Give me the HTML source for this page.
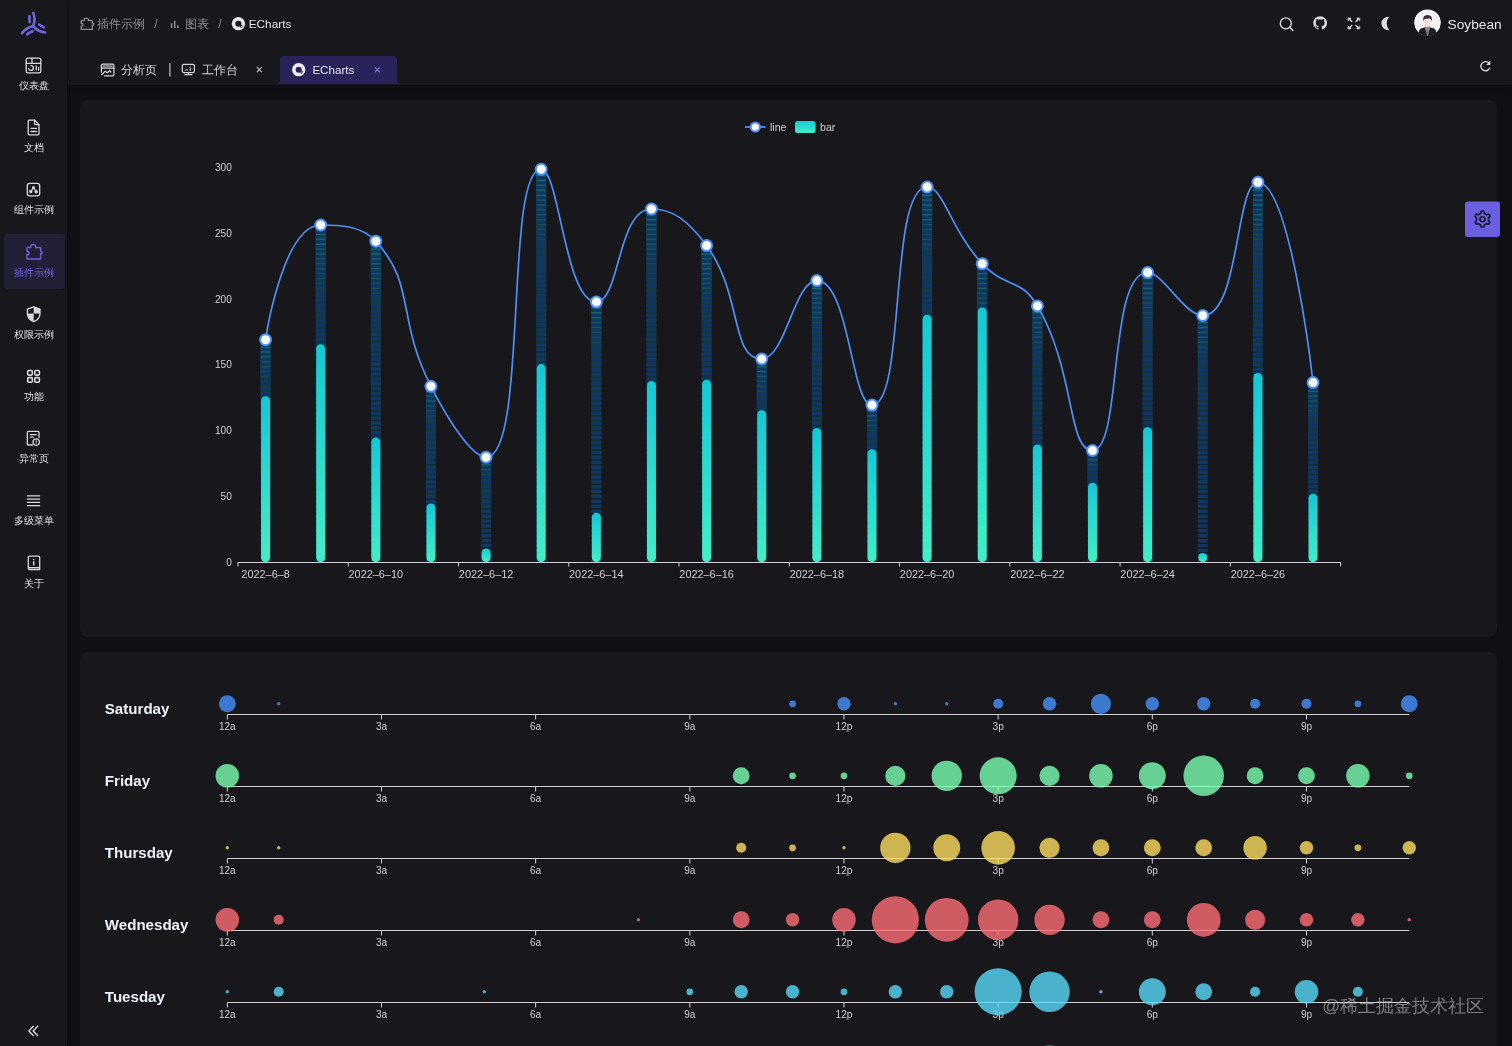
<!DOCTYPE html>
<html><head><meta charset="utf-8"><title>ECharts</title>
<style>
html,body{margin:0;padding:0;width:1512px;height:1046px;overflow:hidden;background:#101014;font-family:"Liberation Sans", sans-serif;}
.abs{position:absolute}
#sider{left:0;top:0;width:67px;height:1046px;background:#18181c;box-shadow:1px 0 2px rgba(0,0,0,.25)}
#header{left:67px;top:0;width:1445px;height:85px;background:#18181c;box-shadow:0 1px 4px rgba(0,0,0,.3)}
.card{background:#18181c;border-radius:8px}
svg{position:absolute;left:0;top:0;overflow:visible;will-change:transform}
</style></head><body>
<div class="abs" id="header"></div>
<div class="abs card" style="left:80px;top:100px;width:1417px;height:537px"></div>
<div class="abs card" style="left:80px;top:652px;width:1417px;height:500px"></div>
<div class="abs" id="sider"></div>

<svg width="1512" height="1046" viewBox="0 0 1512 1046" font-family='"Liberation Sans", sans-serif'><g fill="none" stroke="#6f63e0" stroke-width="2.6" stroke-linecap="round"><path d="M33.3,12.9 Q35.8,19.5 33.2,26.1"/><path d="M33.2,26.1 Q26.5,27.2 22,33.1"/><path d="M33.2,26.1 Q37.5,31.5 45.2,32.5"/><path d="M29.4,16.3 L29.6,22.3"/><path d="M39.1,24.5 L43.7,27.3"/><path d="M27.2,34.3 Q29.5,32.3 32.4,31.2"/></g>
<rect x="4" y="233.7" width="60.8" height="55.3" rx="3" fill="#212036"/>
<text x="33.6" y="89.0" font-size="10.2" font-weight="500" fill="#e2e2e4" text-anchor="middle">仪表盘</text>
<text x="33.6" y="151.2" font-size="10.2" font-weight="500" fill="#e2e2e4" text-anchor="middle">文档</text>
<text x="33.6" y="213.4" font-size="10.2" font-weight="500" fill="#e2e2e4" text-anchor="middle">组件示例</text>
<text x="33.6" y="275.6" font-size="10.2" font-weight="500" fill="#7366e6" text-anchor="middle">插件示例</text>
<text x="33.6" y="337.8" font-size="10.2" font-weight="500" fill="#e2e2e4" text-anchor="middle">权限示例</text>
<text x="33.6" y="400.0" font-size="10.2" font-weight="500" fill="#e2e2e4" text-anchor="middle">功能</text>
<text x="33.6" y="462.2" font-size="10.2" font-weight="500" fill="#e2e2e4" text-anchor="middle">异常页</text>
<text x="33.6" y="524.4" font-size="10.2" font-weight="500" fill="#e2e2e4" text-anchor="middle">多级菜单</text>
<text x="33.6" y="586.6" font-size="10.2" font-weight="500" fill="#e2e2e4" text-anchor="middle">关于</text>
<g fill="none" stroke="#d8d8da" stroke-width="1.3" stroke-linecap="round" stroke-linejoin="round"><rect x="26.2" y="58.2" width="14.6" height="14.6" rx="1.6"/><path d="M26.2,63.3 H40.8 M32,58.2 V63.3"/><path d="M30.9,65.6 A2.4,2.4 0 1 1 28.6,68.6"/><path d="M36.2,65.8 V70 M38.6,67.4 V70"/><path d="M28.2,121.4 Q28.2,120.2 29.4,120.2 H34.6 L39,124.6 V133.6 Q39,134.8 37.8,134.8 H29.4 Q28.2,134.8 28.2,133.6 Z"/><path d="M34.6,120.2 V123.6 Q34.6,124.6 35.6,124.6 H39"/><path d="M31,128.4 H36.4 M31,131.5 H36.4"/><rect x="27.3" y="183.3" width="12.4" height="12.6" rx="2.4"/><path d="M33.5,187.6 L30.8,191.6 M33.5,187.6 L36.2,191.6" stroke-width="1.1"/><circle cx="33.5" cy="187.6" r="0.9" fill="#d8d8da"/><circle cx="30.8" cy="191.6" r="1.1" fill="#d8d8da"/><circle cx="36.2" cy="191.7" r="1.1" fill="#d8d8da"/><path d="M33.7,306.8 L27.4,309.2 V313.8 Q27.4,319.2 33.7,321.6 Q40,319.2 40,313.8 V309.2 Z"/><path d="M33.7,307 V313.5 H40 V309.2 Z M33.7,313.5 V321.4 Q28,319.2 27.5,313.5 Z" fill="#d8d8da" stroke="none"/><rect x="27.7" y="370.5" width="4.6" height="4.6" rx="1" stroke-width="1.6"/><rect x="34.8" y="370.5" width="4.6" height="4.6" rx="1" stroke-width="1.6"/><rect x="27.7" y="377.6" width="4.6" height="4.6" rx="1" stroke-width="1.6"/><rect x="34.8" y="377.6" width="4.6" height="4.6" rx="1" stroke-width="1.6"/><path d="M39,437.6 V432.4 Q39,431.3 37.9,431.3 H28.4 Q27.3,431.3 27.3,432.4 V443.9 Q27.3,445 28.4,445 H32.5"/><path d="M30.3,434.7 H36.3 M30.3,437.2 H33.3" stroke-width="1.2"/><circle cx="36.2" cy="442.1" r="3.2"/><path d="M36.2,440.7 V442.3" stroke-width="1"/><circle cx="36.2" cy="443.6" r="0.5" fill="#d8d8da" stroke="none"/><path d="M26.9,495.9 H40.1 M26.9,499.1 H40.1 M26.9,502.3 H40.1 M26.9,505.5 H40.1" stroke-width="1.25" stroke-linecap="butt"/><path d="M28.3,567.8 V557.4 Q28.3,556.1 29.6,556.1 H38.4 Q39.7,556.1 39.7,557.4 V569.5 H29.6 Q28.3,569.5 28.3,568.2 Q28.3,567.6 29.6,567.6 H39.7"/><path d="M33.7,561.6 V564.9" stroke-width="1.4"/><circle cx="33.7" cy="559.4" r="0.75" fill="#d8d8da" stroke="none"/><path d="M33.3,1026.3 L28.9,1030.9 L33.3,1035.5 M37.6,1026.3 L33.2,1030.9 L37.6,1035.5" stroke-width="1.4"/></g>
<path d="M27,247.6 H30.8 Q30.3,246.6 30.8,245.6 Q32,244.4 33.6,244.6 Q35.2,244.8 35.7,246 Q36,246.9 35.6,247.6 H40.6 V251 Q41.4,250.6 42,251.6 Q42.3,252.5 41.8,253.3 Q41.2,254 40.6,253.6 V259 H27 V254.6 Q28.2,255.2 28.9,254.2 Q29.4,253.1 28.9,252 Q28.2,251 27,251.6 Z" fill="none" stroke="#6e62d8" stroke-width="1.4" stroke-linejoin="round"/>
<g transform="translate(81.2,18.2) scale(0.82,0.78) translate(-27,-244.6)"><path d="M27,247.6 H30.8 Q30.3,246.6 30.8,245.6 Q32,244.4 33.6,244.6 Q35.2,244.8 35.7,246 Q36,246.9 35.6,247.6 H40.6 V251 Q41.4,250.6 42,251.6 Q42.3,252.5 41.8,253.3 Q41.2,254 40.6,253.6 V259 H27 V254.6 Q28.2,255.2 28.9,254.2 Q29.4,253.1 28.9,252 Q28.2,251 27,251.6 Z" fill="none" stroke="#8e8e92" stroke-width="1.6" stroke-linejoin="round"/></g>
<text x="96.8" y="28.3" font-size="11.8" font-weight="500" fill="#8e8e92">插件示例</text>
<text x="156" y="28.3" font-size="12" fill="#8e8e92" text-anchor="middle">/</text>
<path d="M171.6,23.2 V28.1 M174.7,20.7 V28.1 M177.8,25.3 V28.1" stroke="#8e8e92" stroke-width="1.5" stroke-linecap="butt"/>
<text x="185.3" y="28.3" font-size="11.8" font-weight="500" fill="#8e8e92">图表</text>
<text x="219.8" y="28.3" font-size="12" fill="#8e8e92" text-anchor="middle">/</text>
<circle cx="238.4" cy="23.7" r="4.85" fill="none" stroke="#e8e8ea" stroke-width="3.6"/><path d="M239.60,24.70 L243.40,25.70 L240.70,28.30 Z" fill="#18181c"/><circle cx="241.80" cy="26.60" r="0.6" fill="#e8e8ea"/>
<text x="248.7" y="28.1" font-size="11.8" fill="#e2e2e4">ECharts</text>
<circle cx="1285.8" cy="23.4" r="5.5" fill="none" stroke="#dcdcde" stroke-width="1.35"/><path d="M1289.9,27.5 L1292.8,30.4" stroke="#dcdcde" stroke-width="1.5" stroke-linecap="round"/>
<g transform="translate(1313.3,16.0) scale(0.575)"><path d="M12 .297c-6.63 0-12 5.373-12 12 0 5.303 3.438 9.8 8.205 11.385.6.113.82-.258.82-.577 0-.285-.01-1.04-.015-2.04-3.338.724-4.042-1.61-4.042-1.61C4.422 18.07 3.633 17.7 3.633 17.7c-1.087-.744.084-.729.084-.729 1.205.084 1.838 1.236 1.838 1.236 1.07 1.835 2.809 1.305 3.495.998.108-.776.417-1.305.76-1.605-2.665-.3-5.466-1.332-5.466-5.930 0-1.310.465-2.380 1.235-3.220-.135-.303-.54-1.523.105-3.176 0 0 1.005-.322 3.300 1.230.96-.267 1.980-.399 3-.405 1.020.006 2.040.138 3 .405 2.280-1.552 3.285-1.230 3.285-1.230.645 1.653.24 2.873.12 3.176.765.840 1.230 1.910 1.230 3.220 0 4.610-2.805 5.625-5.475 5.920.42.36.81 1.096.81 2.220 0 1.606-.015 2.896-.015 3.286 0 .315.21.69.825.57C20.565 22.092 24 17.592 24 12.297c0-6.627-5.373-12-12-12" fill="#dcdcde"/></g>
<g fill="#dcdcde" stroke="#dcdcde" stroke-width="1.3" stroke-linecap="round"><path d="M1348.2,17.9 h3.0 l-1.2,1.2 L1351.1000000000001,20.2 L1350.5,20.799999999999997 L1349.4,19.7 L1348.2,20.9 Z" stroke-width="0.5" stroke-linejoin="round"/><path d="M1349.7,19.4 L1351.9,21.599999999999998" stroke-width="1.2"/><path d="M1359.5,17.9 h-3.0 l1.2,1.2 L1356.6,20.2 L1357.2,20.799999999999997 L1358.3,19.7 L1359.5,20.9 Z" stroke-width="0.5" stroke-linejoin="round"/><path d="M1358.0,19.4 L1355.8,21.599999999999998" stroke-width="1.2"/><path d="M1348.2,29.0 h3.0 l-1.2,-1.2 L1351.1000000000001,26.7 L1350.5,26.1 L1349.4,27.2 L1348.2,26.0 Z" stroke-width="0.5" stroke-linejoin="round"/><path d="M1349.7,27.5 L1351.9,25.3" stroke-width="1.2"/><path d="M1359.5,29.0 h-3.0 l1.2,-1.2 L1356.6,26.7 L1357.2,26.1 L1358.3,27.2 L1359.5,26.0 Z" stroke-width="0.5" stroke-linejoin="round"/><path d="M1358.0,27.5 L1355.8,25.3" stroke-width="1.2"/></g>
<path d="M1389.0,16.9 A6.65,6.65 0 1 0 1389.2,30.0 A10,10 0 0 1 1389.0,16.9 Z" fill="#dcdcde"/>
<clipPath id="avc"><circle cx="1427.5" cy="22.6" r="13.4"/></clipPath><g clip-path="url(#avc)"><circle cx="1427.5" cy="22.6" r="13.4" fill="#f2f2f4"/><path d="M1417.5,38 L1419.3,30.2 Q1420,28.6 1422.5,28 L1427.5,26.8 L1432.5,28 Q1435,28.6 1435.7,30.2 L1437.5,38 Z" fill="#1e1e20"/><path d="M1424.6,26.6 L1427.5,37 L1430.4,26.6 Z" fill="#8e8e92"/><path d="M1426.9,30 L1428.1,30 L1428.4,34 L1426.6,34 Z" fill="#5a6a80"/><rect x="1424.3" y="18.6" width="6.4" height="8.2" rx="2.8" fill="#f6e2d2"/><path d="M1423.3,21.2 Q1422.3,14.8 1427.6,14.9 Q1432.8,15 1431.9,21 Q1431.2,18.6 1429,18.4 Q1426.6,18.3 1425,19.1 Q1423.9,19.7 1423.3,21.2 Z" fill="#363032"/></g>
<text x="1447.6" y="28.6" font-size="13.7" fill="#e4e4e6">Soybean</text>
<g fill="none" stroke="#d4d4d6" stroke-width="1.25" stroke-linecap="round" stroke-linejoin="round"><path d="M101.4,72 V65.2 Q101.4,64.1 102.5,64.1 H112.8 Q113.9,64.1 113.9,65.2 V74.8 Q113.9,75.9 112.8,75.9 H104.5"/><path d="M101.4,68.1 H113.9" /><rect x="102.6" y="65.2" width="10.1" height="2" fill="#8a8a8e" stroke="none"/><path d="M101.6,74.6 L105.2,71.3 L107.3,72.8 L109.6,70.6 L110.8,72"/><rect x="182.3" y="64.4" width="12.1" height="8.1" rx="1.5"/><path d="M188.3,72.5 V74.4 M184.8,74.5 H191.9"/><path d="M185,70.6 L186.4,69.2 L187.6,70 M190.2,67 V70.7" stroke-width="1"/></g>
<text x="121.3" y="73.9" font-size="11.6" font-weight="500" fill="#d4d4d6">分析页</text>
<path d="M169.9,63.2 V76.4" stroke="#d0d0d2" stroke-width="1.1"/>
<text x="201.7" y="73.9" font-size="11.6" font-weight="500" fill="#d4d4d6">工作台</text>
<path d="M256.8,67.1 L261.8,72.1 M261.8,67.1 L256.8,72.1" stroke="#c8c8ca" stroke-width="1.1"/>
<path d="M276,83.8 Q279.6,83.4 280.1,80.2 V60 Q280.1,56 284.1,56 H393 Q397,56 397,60 V80.2 Q397.4,83.4 401,83.8 Z" fill="#28245a"/>
<circle cx="298.7" cy="69.7" r="4.85" fill="none" stroke="#ecebf6" stroke-width="3.6"/><path d="M299.90,70.70 L303.70,71.70 L301.00,74.30 Z" fill="#28245a"/><circle cx="302.10" cy="72.60" r="0.6" fill="#ecebf6"/>
<text x="312.4" y="73.9" font-size="11.6" fill="#e6e3fa">ECharts</text>
<path d="M375,67.3 L379.8,72.1 M379.8,67.3 L375,72.1" stroke="#7d72f4" stroke-width="1.2"/>
<path d="M1489.3,63.6 A4.6,4.6 0 1 0 1489.9,67.6" fill="none" stroke="#dcdcde" stroke-width="1.35"/><path d="M1490.4,60.6 V64.9 H1486.2 Z" fill="#dcdcde"/>
<defs><linearGradient id="bg1" x1="0" y1="0" x2="0" y2="1"><stop offset="0" stop-color="#14c8d4"/><stop offset="1" stop-color="#43eec6"/></linearGradient></defs>
<path d="M745,127 H765.5" stroke="#4d8ff5" stroke-width="1.8"/><circle cx="755.3" cy="127" r="4.6" fill="#fff" stroke="#4d8ff5" stroke-width="2"/>
<text x="770" y="130.8" font-size="10.6" fill="#cfcfd2">line</text>
<rect x="795" y="121" width="20.6" height="12" rx="2.5" fill="url(#bg1)"/>
<text x="820" y="130.8" font-size="10.6" fill="#cfcfd2">bar</text>
<text x="231.8" y="565.7" font-size="10.1" fill="#cfcfd2" text-anchor="end">0</text>
<text x="231.8" y="499.9" font-size="10.1" fill="#cfcfd2" text-anchor="end">50</text>
<text x="231.8" y="434.1" font-size="10.1" fill="#cfcfd2" text-anchor="end">100</text>
<text x="231.8" y="368.3" font-size="10.1" fill="#cfcfd2" text-anchor="end">150</text>
<text x="231.8" y="302.5" font-size="10.1" fill="#cfcfd2" text-anchor="end">200</text>
<text x="231.8" y="236.7" font-size="10.1" fill="#cfcfd2" text-anchor="end">250</text>
<text x="231.8" y="170.9" font-size="10.1" fill="#cfcfd2" text-anchor="end">300</text>
<g><linearGradient id="gb0" gradientUnits="userSpaceOnUse" x1="0" y1="339.7" x2="0" y2="562.0"><stop offset="0" stop-color="rgb(20,200,212)" stop-opacity="0.5"/><stop offset="0.2" stop-color="rgb(20,200,212)" stop-opacity="0.2"/><stop offset="1" stop-color="rgb(20,200,212)" stop-opacity="0"/></linearGradient><rect x="260.56" y="339.70" width="10" height="222.30" fill="url(#gb0)"/><path d="M260.56,558.50h10v3.5h-10zM260.56,553.60h10v3.5h-10zM260.56,548.70h10v3.5h-10zM260.56,543.80h10v3.5h-10zM260.56,538.90h10v3.5h-10zM260.56,534.00h10v3.5h-10zM260.56,529.10h10v3.5h-10zM260.56,524.20h10v3.5h-10zM260.56,519.30h10v3.5h-10zM260.56,514.40h10v3.5h-10zM260.56,509.50h10v3.5h-10zM260.56,504.60h10v3.5h-10zM260.56,499.70h10v3.5h-10zM260.56,494.80h10v3.5h-10zM260.56,489.90h10v3.5h-10zM260.56,485.00h10v3.5h-10zM260.56,480.10h10v3.5h-10zM260.56,475.20h10v3.5h-10zM260.56,470.30h10v3.5h-10zM260.56,465.40h10v3.5h-10zM260.56,460.50h10v3.5h-10zM260.56,455.60h10v3.5h-10zM260.56,450.70h10v3.5h-10zM260.56,445.80h10v3.5h-10zM260.56,440.90h10v3.5h-10zM260.56,436.00h10v3.5h-10zM260.56,431.10h10v3.5h-10zM260.56,426.20h10v3.5h-10zM260.56,421.30h10v3.5h-10zM260.56,416.40h10v3.5h-10zM260.56,411.50h10v3.5h-10zM260.56,406.60h10v3.5h-10zM260.56,401.70h10v3.5h-10zM260.56,396.80h10v3.5h-10zM260.56,391.90h10v3.5h-10zM260.56,387.00h10v3.5h-10zM260.56,382.10h10v3.5h-10zM260.56,377.20h10v3.5h-10zM260.56,372.30h10v3.5h-10zM260.56,367.40h10v3.5h-10zM260.56,362.50h10v3.5h-10zM260.56,357.60h10v3.5h-10zM260.56,352.70h10v3.5h-10zM260.56,347.80h10v3.5h-10zM260.56,342.90h10v3.5h-10z" fill="#0f375f"/><linearGradient id="gb1" gradientUnits="userSpaceOnUse" x1="0" y1="225.0" x2="0" y2="562.0"><stop offset="0" stop-color="rgb(20,200,212)" stop-opacity="0.5"/><stop offset="0.2" stop-color="rgb(20,200,212)" stop-opacity="0.2"/><stop offset="1" stop-color="rgb(20,200,212)" stop-opacity="0"/></linearGradient><rect x="315.69" y="225.00" width="10" height="337.00" fill="url(#gb1)"/><path d="M315.69,558.50h10v3.5h-10zM315.69,553.60h10v3.5h-10zM315.69,548.70h10v3.5h-10zM315.69,543.80h10v3.5h-10zM315.69,538.90h10v3.5h-10zM315.69,534.00h10v3.5h-10zM315.69,529.10h10v3.5h-10zM315.69,524.20h10v3.5h-10zM315.69,519.30h10v3.5h-10zM315.69,514.40h10v3.5h-10zM315.69,509.50h10v3.5h-10zM315.69,504.60h10v3.5h-10zM315.69,499.70h10v3.5h-10zM315.69,494.80h10v3.5h-10zM315.69,489.90h10v3.5h-10zM315.69,485.00h10v3.5h-10zM315.69,480.10h10v3.5h-10zM315.69,475.20h10v3.5h-10zM315.69,470.30h10v3.5h-10zM315.69,465.40h10v3.5h-10zM315.69,460.50h10v3.5h-10zM315.69,455.60h10v3.5h-10zM315.69,450.70h10v3.5h-10zM315.69,445.80h10v3.5h-10zM315.69,440.90h10v3.5h-10zM315.69,436.00h10v3.5h-10zM315.69,431.10h10v3.5h-10zM315.69,426.20h10v3.5h-10zM315.69,421.30h10v3.5h-10zM315.69,416.40h10v3.5h-10zM315.69,411.50h10v3.5h-10zM315.69,406.60h10v3.5h-10zM315.69,401.70h10v3.5h-10zM315.69,396.80h10v3.5h-10zM315.69,391.90h10v3.5h-10zM315.69,387.00h10v3.5h-10zM315.69,382.10h10v3.5h-10zM315.69,377.20h10v3.5h-10zM315.69,372.30h10v3.5h-10zM315.69,367.40h10v3.5h-10zM315.69,362.50h10v3.5h-10zM315.69,357.60h10v3.5h-10zM315.69,352.70h10v3.5h-10zM315.69,347.80h10v3.5h-10zM315.69,342.90h10v3.5h-10zM315.69,338.00h10v3.5h-10zM315.69,333.10h10v3.5h-10zM315.69,328.20h10v3.5h-10zM315.69,323.30h10v3.5h-10zM315.69,318.40h10v3.5h-10zM315.69,313.50h10v3.5h-10zM315.69,308.60h10v3.5h-10zM315.69,303.70h10v3.5h-10zM315.69,298.80h10v3.5h-10zM315.69,293.90h10v3.5h-10zM315.69,289.00h10v3.5h-10zM315.69,284.10h10v3.5h-10zM315.69,279.20h10v3.5h-10zM315.69,274.30h10v3.5h-10zM315.69,269.40h10v3.5h-10zM315.69,264.50h10v3.5h-10zM315.69,259.60h10v3.5h-10zM315.69,254.70h10v3.5h-10zM315.69,249.80h10v3.5h-10zM315.69,244.90h10v3.5h-10zM315.69,240.00h10v3.5h-10zM315.69,235.10h10v3.5h-10zM315.69,230.20h10v3.5h-10zM315.69,225.30h10v3.5h-10z" fill="#0f375f"/><linearGradient id="gb2" gradientUnits="userSpaceOnUse" x1="0" y1="241.2" x2="0" y2="562.0"><stop offset="0" stop-color="rgb(20,200,212)" stop-opacity="0.5"/><stop offset="0.2" stop-color="rgb(20,200,212)" stop-opacity="0.2"/><stop offset="1" stop-color="rgb(20,200,212)" stop-opacity="0"/></linearGradient><rect x="370.82" y="241.20" width="10" height="320.80" fill="url(#gb2)"/><path d="M370.82,558.50h10v3.5h-10zM370.82,553.60h10v3.5h-10zM370.82,548.70h10v3.5h-10zM370.82,543.80h10v3.5h-10zM370.82,538.90h10v3.5h-10zM370.82,534.00h10v3.5h-10zM370.82,529.10h10v3.5h-10zM370.82,524.20h10v3.5h-10zM370.82,519.30h10v3.5h-10zM370.82,514.40h10v3.5h-10zM370.82,509.50h10v3.5h-10zM370.82,504.60h10v3.5h-10zM370.82,499.70h10v3.5h-10zM370.82,494.80h10v3.5h-10zM370.82,489.90h10v3.5h-10zM370.82,485.00h10v3.5h-10zM370.82,480.10h10v3.5h-10zM370.82,475.20h10v3.5h-10zM370.82,470.30h10v3.5h-10zM370.82,465.40h10v3.5h-10zM370.82,460.50h10v3.5h-10zM370.82,455.60h10v3.5h-10zM370.82,450.70h10v3.5h-10zM370.82,445.80h10v3.5h-10zM370.82,440.90h10v3.5h-10zM370.82,436.00h10v3.5h-10zM370.82,431.10h10v3.5h-10zM370.82,426.20h10v3.5h-10zM370.82,421.30h10v3.5h-10zM370.82,416.40h10v3.5h-10zM370.82,411.50h10v3.5h-10zM370.82,406.60h10v3.5h-10zM370.82,401.70h10v3.5h-10zM370.82,396.80h10v3.5h-10zM370.82,391.90h10v3.5h-10zM370.82,387.00h10v3.5h-10zM370.82,382.10h10v3.5h-10zM370.82,377.20h10v3.5h-10zM370.82,372.30h10v3.5h-10zM370.82,367.40h10v3.5h-10zM370.82,362.50h10v3.5h-10zM370.82,357.60h10v3.5h-10zM370.82,352.70h10v3.5h-10zM370.82,347.80h10v3.5h-10zM370.82,342.90h10v3.5h-10zM370.82,338.00h10v3.5h-10zM370.82,333.10h10v3.5h-10zM370.82,328.20h10v3.5h-10zM370.82,323.30h10v3.5h-10zM370.82,318.40h10v3.5h-10zM370.82,313.50h10v3.5h-10zM370.82,308.60h10v3.5h-10zM370.82,303.70h10v3.5h-10zM370.82,298.80h10v3.5h-10zM370.82,293.90h10v3.5h-10zM370.82,289.00h10v3.5h-10zM370.82,284.10h10v3.5h-10zM370.82,279.20h10v3.5h-10zM370.82,274.30h10v3.5h-10zM370.82,269.40h10v3.5h-10zM370.82,264.50h10v3.5h-10zM370.82,259.60h10v3.5h-10zM370.82,254.70h10v3.5h-10zM370.82,249.80h10v3.5h-10zM370.82,244.90h10v3.5h-10z" fill="#0f375f"/><linearGradient id="gb3" gradientUnits="userSpaceOnUse" x1="0" y1="386.3" x2="0" y2="562.0"><stop offset="0" stop-color="rgb(20,200,212)" stop-opacity="0.5"/><stop offset="0.2" stop-color="rgb(20,200,212)" stop-opacity="0.2"/><stop offset="1" stop-color="rgb(20,200,212)" stop-opacity="0"/></linearGradient><rect x="425.95" y="386.30" width="10" height="175.70" fill="url(#gb3)"/><path d="M425.95,558.50h10v3.5h-10zM425.95,553.60h10v3.5h-10zM425.95,548.70h10v3.5h-10zM425.95,543.80h10v3.5h-10zM425.95,538.90h10v3.5h-10zM425.95,534.00h10v3.5h-10zM425.95,529.10h10v3.5h-10zM425.95,524.20h10v3.5h-10zM425.95,519.30h10v3.5h-10zM425.95,514.40h10v3.5h-10zM425.95,509.50h10v3.5h-10zM425.95,504.60h10v3.5h-10zM425.95,499.70h10v3.5h-10zM425.95,494.80h10v3.5h-10zM425.95,489.90h10v3.5h-10zM425.95,485.00h10v3.5h-10zM425.95,480.10h10v3.5h-10zM425.95,475.20h10v3.5h-10zM425.95,470.30h10v3.5h-10zM425.95,465.40h10v3.5h-10zM425.95,460.50h10v3.5h-10zM425.95,455.60h10v3.5h-10zM425.95,450.70h10v3.5h-10zM425.95,445.80h10v3.5h-10zM425.95,440.90h10v3.5h-10zM425.95,436.00h10v3.5h-10zM425.95,431.10h10v3.5h-10zM425.95,426.20h10v3.5h-10zM425.95,421.30h10v3.5h-10zM425.95,416.40h10v3.5h-10zM425.95,411.50h10v3.5h-10zM425.95,406.60h10v3.5h-10zM425.95,401.70h10v3.5h-10zM425.95,396.80h10v3.5h-10zM425.95,391.90h10v3.5h-10zM425.95,387.00h10v3.5h-10z" fill="#0f375f"/><linearGradient id="gb4" gradientUnits="userSpaceOnUse" x1="0" y1="457.2" x2="0" y2="562.0"><stop offset="0" stop-color="rgb(20,200,212)" stop-opacity="0.5"/><stop offset="0.2" stop-color="rgb(20,200,212)" stop-opacity="0.2"/><stop offset="1" stop-color="rgb(20,200,212)" stop-opacity="0"/></linearGradient><rect x="481.08" y="457.20" width="10" height="104.80" fill="url(#gb4)"/><path d="M481.08,558.50h10v3.5h-10zM481.08,553.60h10v3.5h-10zM481.08,548.70h10v3.5h-10zM481.08,543.80h10v3.5h-10zM481.08,538.90h10v3.5h-10zM481.08,534.00h10v3.5h-10zM481.08,529.10h10v3.5h-10zM481.08,524.20h10v3.5h-10zM481.08,519.30h10v3.5h-10zM481.08,514.40h10v3.5h-10zM481.08,509.50h10v3.5h-10zM481.08,504.60h10v3.5h-10zM481.08,499.70h10v3.5h-10zM481.08,494.80h10v3.5h-10zM481.08,489.90h10v3.5h-10zM481.08,485.00h10v3.5h-10zM481.08,480.10h10v3.5h-10zM481.08,475.20h10v3.5h-10zM481.08,470.30h10v3.5h-10zM481.08,465.40h10v3.5h-10zM481.08,460.50h10v3.5h-10z" fill="#0f375f"/><linearGradient id="gb5" gradientUnits="userSpaceOnUse" x1="0" y1="169.3" x2="0" y2="562.0"><stop offset="0" stop-color="rgb(20,200,212)" stop-opacity="0.5"/><stop offset="0.2" stop-color="rgb(20,200,212)" stop-opacity="0.2"/><stop offset="1" stop-color="rgb(20,200,212)" stop-opacity="0"/></linearGradient><rect x="536.21" y="169.30" width="10" height="392.70" fill="url(#gb5)"/><path d="M536.21,558.50h10v3.5h-10zM536.21,553.60h10v3.5h-10zM536.21,548.70h10v3.5h-10zM536.21,543.80h10v3.5h-10zM536.21,538.90h10v3.5h-10zM536.21,534.00h10v3.5h-10zM536.21,529.10h10v3.5h-10zM536.21,524.20h10v3.5h-10zM536.21,519.30h10v3.5h-10zM536.21,514.40h10v3.5h-10zM536.21,509.50h10v3.5h-10zM536.21,504.60h10v3.5h-10zM536.21,499.70h10v3.5h-10zM536.21,494.80h10v3.5h-10zM536.21,489.90h10v3.5h-10zM536.21,485.00h10v3.5h-10zM536.21,480.10h10v3.5h-10zM536.21,475.20h10v3.5h-10zM536.21,470.30h10v3.5h-10zM536.21,465.40h10v3.5h-10zM536.21,460.50h10v3.5h-10zM536.21,455.60h10v3.5h-10zM536.21,450.70h10v3.5h-10zM536.21,445.80h10v3.5h-10zM536.21,440.90h10v3.5h-10zM536.21,436.00h10v3.5h-10zM536.21,431.10h10v3.5h-10zM536.21,426.20h10v3.5h-10zM536.21,421.30h10v3.5h-10zM536.21,416.40h10v3.5h-10zM536.21,411.50h10v3.5h-10zM536.21,406.60h10v3.5h-10zM536.21,401.70h10v3.5h-10zM536.21,396.80h10v3.5h-10zM536.21,391.90h10v3.5h-10zM536.21,387.00h10v3.5h-10zM536.21,382.10h10v3.5h-10zM536.21,377.20h10v3.5h-10zM536.21,372.30h10v3.5h-10zM536.21,367.40h10v3.5h-10zM536.21,362.50h10v3.5h-10zM536.21,357.60h10v3.5h-10zM536.21,352.70h10v3.5h-10zM536.21,347.80h10v3.5h-10zM536.21,342.90h10v3.5h-10zM536.21,338.00h10v3.5h-10zM536.21,333.10h10v3.5h-10zM536.21,328.20h10v3.5h-10zM536.21,323.30h10v3.5h-10zM536.21,318.40h10v3.5h-10zM536.21,313.50h10v3.5h-10zM536.21,308.60h10v3.5h-10zM536.21,303.70h10v3.5h-10zM536.21,298.80h10v3.5h-10zM536.21,293.90h10v3.5h-10zM536.21,289.00h10v3.5h-10zM536.21,284.10h10v3.5h-10zM536.21,279.20h10v3.5h-10zM536.21,274.30h10v3.5h-10zM536.21,269.40h10v3.5h-10zM536.21,264.50h10v3.5h-10zM536.21,259.60h10v3.5h-10zM536.21,254.70h10v3.5h-10zM536.21,249.80h10v3.5h-10zM536.21,244.90h10v3.5h-10zM536.21,240.00h10v3.5h-10zM536.21,235.10h10v3.5h-10zM536.21,230.20h10v3.5h-10zM536.21,225.30h10v3.5h-10zM536.21,220.40h10v3.5h-10zM536.21,215.50h10v3.5h-10zM536.21,210.60h10v3.5h-10zM536.21,205.70h10v3.5h-10zM536.21,200.80h10v3.5h-10zM536.21,195.90h10v3.5h-10zM536.21,191.00h10v3.5h-10zM536.21,186.10h10v3.5h-10zM536.21,181.20h10v3.5h-10zM536.21,176.30h10v3.5h-10zM536.21,171.40h10v3.5h-10z" fill="#0f375f"/><linearGradient id="gb6" gradientUnits="userSpaceOnUse" x1="0" y1="301.9" x2="0" y2="562.0"><stop offset="0" stop-color="rgb(20,200,212)" stop-opacity="0.5"/><stop offset="0.2" stop-color="rgb(20,200,212)" stop-opacity="0.2"/><stop offset="1" stop-color="rgb(20,200,212)" stop-opacity="0"/></linearGradient><rect x="591.35" y="301.90" width="10" height="260.10" fill="url(#gb6)"/><path d="M591.35,558.50h10v3.5h-10zM591.35,553.60h10v3.5h-10zM591.35,548.70h10v3.5h-10zM591.35,543.80h10v3.5h-10zM591.35,538.90h10v3.5h-10zM591.35,534.00h10v3.5h-10zM591.35,529.10h10v3.5h-10zM591.35,524.20h10v3.5h-10zM591.35,519.30h10v3.5h-10zM591.35,514.40h10v3.5h-10zM591.35,509.50h10v3.5h-10zM591.35,504.60h10v3.5h-10zM591.35,499.70h10v3.5h-10zM591.35,494.80h10v3.5h-10zM591.35,489.90h10v3.5h-10zM591.35,485.00h10v3.5h-10zM591.35,480.10h10v3.5h-10zM591.35,475.20h10v3.5h-10zM591.35,470.30h10v3.5h-10zM591.35,465.40h10v3.5h-10zM591.35,460.50h10v3.5h-10zM591.35,455.60h10v3.5h-10zM591.35,450.70h10v3.5h-10zM591.35,445.80h10v3.5h-10zM591.35,440.90h10v3.5h-10zM591.35,436.00h10v3.5h-10zM591.35,431.10h10v3.5h-10zM591.35,426.20h10v3.5h-10zM591.35,421.30h10v3.5h-10zM591.35,416.40h10v3.5h-10zM591.35,411.50h10v3.5h-10zM591.35,406.60h10v3.5h-10zM591.35,401.70h10v3.5h-10zM591.35,396.80h10v3.5h-10zM591.35,391.90h10v3.5h-10zM591.35,387.00h10v3.5h-10zM591.35,382.10h10v3.5h-10zM591.35,377.20h10v3.5h-10zM591.35,372.30h10v3.5h-10zM591.35,367.40h10v3.5h-10zM591.35,362.50h10v3.5h-10zM591.35,357.60h10v3.5h-10zM591.35,352.70h10v3.5h-10zM591.35,347.80h10v3.5h-10zM591.35,342.90h10v3.5h-10zM591.35,338.00h10v3.5h-10zM591.35,333.10h10v3.5h-10zM591.35,328.20h10v3.5h-10zM591.35,323.30h10v3.5h-10zM591.35,318.40h10v3.5h-10zM591.35,313.50h10v3.5h-10zM591.35,308.60h10v3.5h-10zM591.35,303.70h10v3.5h-10z" fill="#0f375f"/><linearGradient id="gb7" gradientUnits="userSpaceOnUse" x1="0" y1="209.0" x2="0" y2="562.0"><stop offset="0" stop-color="rgb(20,200,212)" stop-opacity="0.5"/><stop offset="0.2" stop-color="rgb(20,200,212)" stop-opacity="0.2"/><stop offset="1" stop-color="rgb(20,200,212)" stop-opacity="0"/></linearGradient><rect x="646.47" y="209.00" width="10" height="353.00" fill="url(#gb7)"/><path d="M646.47,558.50h10v3.5h-10zM646.47,553.60h10v3.5h-10zM646.47,548.70h10v3.5h-10zM646.47,543.80h10v3.5h-10zM646.47,538.90h10v3.5h-10zM646.47,534.00h10v3.5h-10zM646.47,529.10h10v3.5h-10zM646.47,524.20h10v3.5h-10zM646.47,519.30h10v3.5h-10zM646.47,514.40h10v3.5h-10zM646.47,509.50h10v3.5h-10zM646.47,504.60h10v3.5h-10zM646.47,499.70h10v3.5h-10zM646.47,494.80h10v3.5h-10zM646.47,489.90h10v3.5h-10zM646.47,485.00h10v3.5h-10zM646.47,480.10h10v3.5h-10zM646.47,475.20h10v3.5h-10zM646.47,470.30h10v3.5h-10zM646.47,465.40h10v3.5h-10zM646.47,460.50h10v3.5h-10zM646.47,455.60h10v3.5h-10zM646.47,450.70h10v3.5h-10zM646.47,445.80h10v3.5h-10zM646.47,440.90h10v3.5h-10zM646.47,436.00h10v3.5h-10zM646.47,431.10h10v3.5h-10zM646.47,426.20h10v3.5h-10zM646.47,421.30h10v3.5h-10zM646.47,416.40h10v3.5h-10zM646.47,411.50h10v3.5h-10zM646.47,406.60h10v3.5h-10zM646.47,401.70h10v3.5h-10zM646.47,396.80h10v3.5h-10zM646.47,391.90h10v3.5h-10zM646.47,387.00h10v3.5h-10zM646.47,382.10h10v3.5h-10zM646.47,377.20h10v3.5h-10zM646.47,372.30h10v3.5h-10zM646.47,367.40h10v3.5h-10zM646.47,362.50h10v3.5h-10zM646.47,357.60h10v3.5h-10zM646.47,352.70h10v3.5h-10zM646.47,347.80h10v3.5h-10zM646.47,342.90h10v3.5h-10zM646.47,338.00h10v3.5h-10zM646.47,333.10h10v3.5h-10zM646.47,328.20h10v3.5h-10zM646.47,323.30h10v3.5h-10zM646.47,318.40h10v3.5h-10zM646.47,313.50h10v3.5h-10zM646.47,308.60h10v3.5h-10zM646.47,303.70h10v3.5h-10zM646.47,298.80h10v3.5h-10zM646.47,293.90h10v3.5h-10zM646.47,289.00h10v3.5h-10zM646.47,284.10h10v3.5h-10zM646.47,279.20h10v3.5h-10zM646.47,274.30h10v3.5h-10zM646.47,269.40h10v3.5h-10zM646.47,264.50h10v3.5h-10zM646.47,259.60h10v3.5h-10zM646.47,254.70h10v3.5h-10zM646.47,249.80h10v3.5h-10zM646.47,244.90h10v3.5h-10zM646.47,240.00h10v3.5h-10zM646.47,235.10h10v3.5h-10zM646.47,230.20h10v3.5h-10zM646.47,225.30h10v3.5h-10zM646.47,220.40h10v3.5h-10zM646.47,215.50h10v3.5h-10zM646.47,210.60h10v3.5h-10z" fill="#0f375f"/><linearGradient id="gb8" gradientUnits="userSpaceOnUse" x1="0" y1="245.6" x2="0" y2="562.0"><stop offset="0" stop-color="rgb(20,200,212)" stop-opacity="0.5"/><stop offset="0.2" stop-color="rgb(20,200,212)" stop-opacity="0.2"/><stop offset="1" stop-color="rgb(20,200,212)" stop-opacity="0"/></linearGradient><rect x="701.61" y="245.60" width="10" height="316.40" fill="url(#gb8)"/><path d="M701.61,558.50h10v3.5h-10zM701.61,553.60h10v3.5h-10zM701.61,548.70h10v3.5h-10zM701.61,543.80h10v3.5h-10zM701.61,538.90h10v3.5h-10zM701.61,534.00h10v3.5h-10zM701.61,529.10h10v3.5h-10zM701.61,524.20h10v3.5h-10zM701.61,519.30h10v3.5h-10zM701.61,514.40h10v3.5h-10zM701.61,509.50h10v3.5h-10zM701.61,504.60h10v3.5h-10zM701.61,499.70h10v3.5h-10zM701.61,494.80h10v3.5h-10zM701.61,489.90h10v3.5h-10zM701.61,485.00h10v3.5h-10zM701.61,480.10h10v3.5h-10zM701.61,475.20h10v3.5h-10zM701.61,470.30h10v3.5h-10zM701.61,465.40h10v3.5h-10zM701.61,460.50h10v3.5h-10zM701.61,455.60h10v3.5h-10zM701.61,450.70h10v3.5h-10zM701.61,445.80h10v3.5h-10zM701.61,440.90h10v3.5h-10zM701.61,436.00h10v3.5h-10zM701.61,431.10h10v3.5h-10zM701.61,426.20h10v3.5h-10zM701.61,421.30h10v3.5h-10zM701.61,416.40h10v3.5h-10zM701.61,411.50h10v3.5h-10zM701.61,406.60h10v3.5h-10zM701.61,401.70h10v3.5h-10zM701.61,396.80h10v3.5h-10zM701.61,391.90h10v3.5h-10zM701.61,387.00h10v3.5h-10zM701.61,382.10h10v3.5h-10zM701.61,377.20h10v3.5h-10zM701.61,372.30h10v3.5h-10zM701.61,367.40h10v3.5h-10zM701.61,362.50h10v3.5h-10zM701.61,357.60h10v3.5h-10zM701.61,352.70h10v3.5h-10zM701.61,347.80h10v3.5h-10zM701.61,342.90h10v3.5h-10zM701.61,338.00h10v3.5h-10zM701.61,333.10h10v3.5h-10zM701.61,328.20h10v3.5h-10zM701.61,323.30h10v3.5h-10zM701.61,318.40h10v3.5h-10zM701.61,313.50h10v3.5h-10zM701.61,308.60h10v3.5h-10zM701.61,303.70h10v3.5h-10zM701.61,298.80h10v3.5h-10zM701.61,293.90h10v3.5h-10zM701.61,289.00h10v3.5h-10zM701.61,284.10h10v3.5h-10zM701.61,279.20h10v3.5h-10zM701.61,274.30h10v3.5h-10zM701.61,269.40h10v3.5h-10zM701.61,264.50h10v3.5h-10zM701.61,259.60h10v3.5h-10zM701.61,254.70h10v3.5h-10zM701.61,249.80h10v3.5h-10z" fill="#0f375f"/><linearGradient id="gb9" gradientUnits="userSpaceOnUse" x1="0" y1="358.9" x2="0" y2="562.0"><stop offset="0" stop-color="rgb(20,200,212)" stop-opacity="0.5"/><stop offset="0.2" stop-color="rgb(20,200,212)" stop-opacity="0.2"/><stop offset="1" stop-color="rgb(20,200,212)" stop-opacity="0"/></linearGradient><rect x="756.73" y="358.90" width="10" height="203.10" fill="url(#gb9)"/><path d="M756.73,558.50h10v3.5h-10zM756.73,553.60h10v3.5h-10zM756.73,548.70h10v3.5h-10zM756.73,543.80h10v3.5h-10zM756.73,538.90h10v3.5h-10zM756.73,534.00h10v3.5h-10zM756.73,529.10h10v3.5h-10zM756.73,524.20h10v3.5h-10zM756.73,519.30h10v3.5h-10zM756.73,514.40h10v3.5h-10zM756.73,509.50h10v3.5h-10zM756.73,504.60h10v3.5h-10zM756.73,499.70h10v3.5h-10zM756.73,494.80h10v3.5h-10zM756.73,489.90h10v3.5h-10zM756.73,485.00h10v3.5h-10zM756.73,480.10h10v3.5h-10zM756.73,475.20h10v3.5h-10zM756.73,470.30h10v3.5h-10zM756.73,465.40h10v3.5h-10zM756.73,460.50h10v3.5h-10zM756.73,455.60h10v3.5h-10zM756.73,450.70h10v3.5h-10zM756.73,445.80h10v3.5h-10zM756.73,440.90h10v3.5h-10zM756.73,436.00h10v3.5h-10zM756.73,431.10h10v3.5h-10zM756.73,426.20h10v3.5h-10zM756.73,421.30h10v3.5h-10zM756.73,416.40h10v3.5h-10zM756.73,411.50h10v3.5h-10zM756.73,406.60h10v3.5h-10zM756.73,401.70h10v3.5h-10zM756.73,396.80h10v3.5h-10zM756.73,391.90h10v3.5h-10zM756.73,387.00h10v3.5h-10zM756.73,382.10h10v3.5h-10zM756.73,377.20h10v3.5h-10zM756.73,372.30h10v3.5h-10zM756.73,367.40h10v3.5h-10zM756.73,362.50h10v3.5h-10z" fill="#0f375f"/><linearGradient id="gb10" gradientUnits="userSpaceOnUse" x1="0" y1="280.6" x2="0" y2="562.0"><stop offset="0" stop-color="rgb(20,200,212)" stop-opacity="0.5"/><stop offset="0.2" stop-color="rgb(20,200,212)" stop-opacity="0.2"/><stop offset="1" stop-color="rgb(20,200,212)" stop-opacity="0"/></linearGradient><rect x="811.87" y="280.60" width="10" height="281.40" fill="url(#gb10)"/><path d="M811.87,558.50h10v3.5h-10zM811.87,553.60h10v3.5h-10zM811.87,548.70h10v3.5h-10zM811.87,543.80h10v3.5h-10zM811.87,538.90h10v3.5h-10zM811.87,534.00h10v3.5h-10zM811.87,529.10h10v3.5h-10zM811.87,524.20h10v3.5h-10zM811.87,519.30h10v3.5h-10zM811.87,514.40h10v3.5h-10zM811.87,509.50h10v3.5h-10zM811.87,504.60h10v3.5h-10zM811.87,499.70h10v3.5h-10zM811.87,494.80h10v3.5h-10zM811.87,489.90h10v3.5h-10zM811.87,485.00h10v3.5h-10zM811.87,480.10h10v3.5h-10zM811.87,475.20h10v3.5h-10zM811.87,470.30h10v3.5h-10zM811.87,465.40h10v3.5h-10zM811.87,460.50h10v3.5h-10zM811.87,455.60h10v3.5h-10zM811.87,450.70h10v3.5h-10zM811.87,445.80h10v3.5h-10zM811.87,440.90h10v3.5h-10zM811.87,436.00h10v3.5h-10zM811.87,431.10h10v3.5h-10zM811.87,426.20h10v3.5h-10zM811.87,421.30h10v3.5h-10zM811.87,416.40h10v3.5h-10zM811.87,411.50h10v3.5h-10zM811.87,406.60h10v3.5h-10zM811.87,401.70h10v3.5h-10zM811.87,396.80h10v3.5h-10zM811.87,391.90h10v3.5h-10zM811.87,387.00h10v3.5h-10zM811.87,382.10h10v3.5h-10zM811.87,377.20h10v3.5h-10zM811.87,372.30h10v3.5h-10zM811.87,367.40h10v3.5h-10zM811.87,362.50h10v3.5h-10zM811.87,357.60h10v3.5h-10zM811.87,352.70h10v3.5h-10zM811.87,347.80h10v3.5h-10zM811.87,342.90h10v3.5h-10zM811.87,338.00h10v3.5h-10zM811.87,333.10h10v3.5h-10zM811.87,328.20h10v3.5h-10zM811.87,323.30h10v3.5h-10zM811.87,318.40h10v3.5h-10zM811.87,313.50h10v3.5h-10zM811.87,308.60h10v3.5h-10zM811.87,303.70h10v3.5h-10zM811.87,298.80h10v3.5h-10zM811.87,293.90h10v3.5h-10zM811.87,289.00h10v3.5h-10zM811.87,284.10h10v3.5h-10z" fill="#0f375f"/><linearGradient id="gb11" gradientUnits="userSpaceOnUse" x1="0" y1="405.1" x2="0" y2="562.0"><stop offset="0" stop-color="rgb(20,200,212)" stop-opacity="0.5"/><stop offset="0.2" stop-color="rgb(20,200,212)" stop-opacity="0.2"/><stop offset="1" stop-color="rgb(20,200,212)" stop-opacity="0"/></linearGradient><rect x="866.99" y="405.10" width="10" height="156.90" fill="url(#gb11)"/><path d="M866.99,558.50h10v3.5h-10zM866.99,553.60h10v3.5h-10zM866.99,548.70h10v3.5h-10zM866.99,543.80h10v3.5h-10zM866.99,538.90h10v3.5h-10zM866.99,534.00h10v3.5h-10zM866.99,529.10h10v3.5h-10zM866.99,524.20h10v3.5h-10zM866.99,519.30h10v3.5h-10zM866.99,514.40h10v3.5h-10zM866.99,509.50h10v3.5h-10zM866.99,504.60h10v3.5h-10zM866.99,499.70h10v3.5h-10zM866.99,494.80h10v3.5h-10zM866.99,489.90h10v3.5h-10zM866.99,485.00h10v3.5h-10zM866.99,480.10h10v3.5h-10zM866.99,475.20h10v3.5h-10zM866.99,470.30h10v3.5h-10zM866.99,465.40h10v3.5h-10zM866.99,460.50h10v3.5h-10zM866.99,455.60h10v3.5h-10zM866.99,450.70h10v3.5h-10zM866.99,445.80h10v3.5h-10zM866.99,440.90h10v3.5h-10zM866.99,436.00h10v3.5h-10zM866.99,431.10h10v3.5h-10zM866.99,426.20h10v3.5h-10zM866.99,421.30h10v3.5h-10zM866.99,416.40h10v3.5h-10zM866.99,411.50h10v3.5h-10zM866.99,406.60h10v3.5h-10z" fill="#0f375f"/><linearGradient id="gb12" gradientUnits="userSpaceOnUse" x1="0" y1="187.0" x2="0" y2="562.0"><stop offset="0" stop-color="rgb(20,200,212)" stop-opacity="0.5"/><stop offset="0.2" stop-color="rgb(20,200,212)" stop-opacity="0.2"/><stop offset="1" stop-color="rgb(20,200,212)" stop-opacity="0"/></linearGradient><rect x="922.12" y="187.00" width="10" height="375.00" fill="url(#gb12)"/><path d="M922.12,558.50h10v3.5h-10zM922.12,553.60h10v3.5h-10zM922.12,548.70h10v3.5h-10zM922.12,543.80h10v3.5h-10zM922.12,538.90h10v3.5h-10zM922.12,534.00h10v3.5h-10zM922.12,529.10h10v3.5h-10zM922.12,524.20h10v3.5h-10zM922.12,519.30h10v3.5h-10zM922.12,514.40h10v3.5h-10zM922.12,509.50h10v3.5h-10zM922.12,504.60h10v3.5h-10zM922.12,499.70h10v3.5h-10zM922.12,494.80h10v3.5h-10zM922.12,489.90h10v3.5h-10zM922.12,485.00h10v3.5h-10zM922.12,480.10h10v3.5h-10zM922.12,475.20h10v3.5h-10zM922.12,470.30h10v3.5h-10zM922.12,465.40h10v3.5h-10zM922.12,460.50h10v3.5h-10zM922.12,455.60h10v3.5h-10zM922.12,450.70h10v3.5h-10zM922.12,445.80h10v3.5h-10zM922.12,440.90h10v3.5h-10zM922.12,436.00h10v3.5h-10zM922.12,431.10h10v3.5h-10zM922.12,426.20h10v3.5h-10zM922.12,421.30h10v3.5h-10zM922.12,416.40h10v3.5h-10zM922.12,411.50h10v3.5h-10zM922.12,406.60h10v3.5h-10zM922.12,401.70h10v3.5h-10zM922.12,396.80h10v3.5h-10zM922.12,391.90h10v3.5h-10zM922.12,387.00h10v3.5h-10zM922.12,382.10h10v3.5h-10zM922.12,377.20h10v3.5h-10zM922.12,372.30h10v3.5h-10zM922.12,367.40h10v3.5h-10zM922.12,362.50h10v3.5h-10zM922.12,357.60h10v3.5h-10zM922.12,352.70h10v3.5h-10zM922.12,347.80h10v3.5h-10zM922.12,342.90h10v3.5h-10zM922.12,338.00h10v3.5h-10zM922.12,333.10h10v3.5h-10zM922.12,328.20h10v3.5h-10zM922.12,323.30h10v3.5h-10zM922.12,318.40h10v3.5h-10zM922.12,313.50h10v3.5h-10zM922.12,308.60h10v3.5h-10zM922.12,303.70h10v3.5h-10zM922.12,298.80h10v3.5h-10zM922.12,293.90h10v3.5h-10zM922.12,289.00h10v3.5h-10zM922.12,284.10h10v3.5h-10zM922.12,279.20h10v3.5h-10zM922.12,274.30h10v3.5h-10zM922.12,269.40h10v3.5h-10zM922.12,264.50h10v3.5h-10zM922.12,259.60h10v3.5h-10zM922.12,254.70h10v3.5h-10zM922.12,249.80h10v3.5h-10zM922.12,244.90h10v3.5h-10zM922.12,240.00h10v3.5h-10zM922.12,235.10h10v3.5h-10zM922.12,230.20h10v3.5h-10zM922.12,225.30h10v3.5h-10zM922.12,220.40h10v3.5h-10zM922.12,215.50h10v3.5h-10zM922.12,210.60h10v3.5h-10zM922.12,205.70h10v3.5h-10zM922.12,200.80h10v3.5h-10zM922.12,195.90h10v3.5h-10zM922.12,191.00h10v3.5h-10z" fill="#0f375f"/><linearGradient id="gb13" gradientUnits="userSpaceOnUse" x1="0" y1="263.7" x2="0" y2="562.0"><stop offset="0" stop-color="rgb(20,200,212)" stop-opacity="0.5"/><stop offset="0.2" stop-color="rgb(20,200,212)" stop-opacity="0.2"/><stop offset="1" stop-color="rgb(20,200,212)" stop-opacity="0"/></linearGradient><rect x="977.25" y="263.70" width="10" height="298.30" fill="url(#gb13)"/><path d="M977.25,558.50h10v3.5h-10zM977.25,553.60h10v3.5h-10zM977.25,548.70h10v3.5h-10zM977.25,543.80h10v3.5h-10zM977.25,538.90h10v3.5h-10zM977.25,534.00h10v3.5h-10zM977.25,529.10h10v3.5h-10zM977.25,524.20h10v3.5h-10zM977.25,519.30h10v3.5h-10zM977.25,514.40h10v3.5h-10zM977.25,509.50h10v3.5h-10zM977.25,504.60h10v3.5h-10zM977.25,499.70h10v3.5h-10zM977.25,494.80h10v3.5h-10zM977.25,489.90h10v3.5h-10zM977.25,485.00h10v3.5h-10zM977.25,480.10h10v3.5h-10zM977.25,475.20h10v3.5h-10zM977.25,470.30h10v3.5h-10zM977.25,465.40h10v3.5h-10zM977.25,460.50h10v3.5h-10zM977.25,455.60h10v3.5h-10zM977.25,450.70h10v3.5h-10zM977.25,445.80h10v3.5h-10zM977.25,440.90h10v3.5h-10zM977.25,436.00h10v3.5h-10zM977.25,431.10h10v3.5h-10zM977.25,426.20h10v3.5h-10zM977.25,421.30h10v3.5h-10zM977.25,416.40h10v3.5h-10zM977.25,411.50h10v3.5h-10zM977.25,406.60h10v3.5h-10zM977.25,401.70h10v3.5h-10zM977.25,396.80h10v3.5h-10zM977.25,391.90h10v3.5h-10zM977.25,387.00h10v3.5h-10zM977.25,382.10h10v3.5h-10zM977.25,377.20h10v3.5h-10zM977.25,372.30h10v3.5h-10zM977.25,367.40h10v3.5h-10zM977.25,362.50h10v3.5h-10zM977.25,357.60h10v3.5h-10zM977.25,352.70h10v3.5h-10zM977.25,347.80h10v3.5h-10zM977.25,342.90h10v3.5h-10zM977.25,338.00h10v3.5h-10zM977.25,333.10h10v3.5h-10zM977.25,328.20h10v3.5h-10zM977.25,323.30h10v3.5h-10zM977.25,318.40h10v3.5h-10zM977.25,313.50h10v3.5h-10zM977.25,308.60h10v3.5h-10zM977.25,303.70h10v3.5h-10zM977.25,298.80h10v3.5h-10zM977.25,293.90h10v3.5h-10zM977.25,289.00h10v3.5h-10zM977.25,284.10h10v3.5h-10zM977.25,279.20h10v3.5h-10zM977.25,274.30h10v3.5h-10zM977.25,269.40h10v3.5h-10zM977.25,264.50h10v3.5h-10z" fill="#0f375f"/><linearGradient id="gb14" gradientUnits="userSpaceOnUse" x1="0" y1="305.9" x2="0" y2="562.0"><stop offset="0" stop-color="rgb(20,200,212)" stop-opacity="0.5"/><stop offset="0.2" stop-color="rgb(20,200,212)" stop-opacity="0.2"/><stop offset="1" stop-color="rgb(20,200,212)" stop-opacity="0"/></linearGradient><rect x="1032.38" y="305.90" width="10" height="256.10" fill="url(#gb14)"/><path d="M1032.38,558.50h10v3.5h-10zM1032.38,553.60h10v3.5h-10zM1032.38,548.70h10v3.5h-10zM1032.38,543.80h10v3.5h-10zM1032.38,538.90h10v3.5h-10zM1032.38,534.00h10v3.5h-10zM1032.38,529.10h10v3.5h-10zM1032.38,524.20h10v3.5h-10zM1032.38,519.30h10v3.5h-10zM1032.38,514.40h10v3.5h-10zM1032.38,509.50h10v3.5h-10zM1032.38,504.60h10v3.5h-10zM1032.38,499.70h10v3.5h-10zM1032.38,494.80h10v3.5h-10zM1032.38,489.90h10v3.5h-10zM1032.38,485.00h10v3.5h-10zM1032.38,480.10h10v3.5h-10zM1032.38,475.20h10v3.5h-10zM1032.38,470.30h10v3.5h-10zM1032.38,465.40h10v3.5h-10zM1032.38,460.50h10v3.5h-10zM1032.38,455.60h10v3.5h-10zM1032.38,450.70h10v3.5h-10zM1032.38,445.80h10v3.5h-10zM1032.38,440.90h10v3.5h-10zM1032.38,436.00h10v3.5h-10zM1032.38,431.10h10v3.5h-10zM1032.38,426.20h10v3.5h-10zM1032.38,421.30h10v3.5h-10zM1032.38,416.40h10v3.5h-10zM1032.38,411.50h10v3.5h-10zM1032.38,406.60h10v3.5h-10zM1032.38,401.70h10v3.5h-10zM1032.38,396.80h10v3.5h-10zM1032.38,391.90h10v3.5h-10zM1032.38,387.00h10v3.5h-10zM1032.38,382.10h10v3.5h-10zM1032.38,377.20h10v3.5h-10zM1032.38,372.30h10v3.5h-10zM1032.38,367.40h10v3.5h-10zM1032.38,362.50h10v3.5h-10zM1032.38,357.60h10v3.5h-10zM1032.38,352.70h10v3.5h-10zM1032.38,347.80h10v3.5h-10zM1032.38,342.90h10v3.5h-10zM1032.38,338.00h10v3.5h-10zM1032.38,333.10h10v3.5h-10zM1032.38,328.20h10v3.5h-10zM1032.38,323.30h10v3.5h-10zM1032.38,318.40h10v3.5h-10zM1032.38,313.50h10v3.5h-10zM1032.38,308.60h10v3.5h-10z" fill="#0f375f"/><linearGradient id="gb15" gradientUnits="userSpaceOnUse" x1="0" y1="450.5" x2="0" y2="562.0"><stop offset="0" stop-color="rgb(20,200,212)" stop-opacity="0.5"/><stop offset="0.2" stop-color="rgb(20,200,212)" stop-opacity="0.2"/><stop offset="1" stop-color="rgb(20,200,212)" stop-opacity="0"/></linearGradient><rect x="1087.51" y="450.50" width="10" height="111.50" fill="url(#gb15)"/><path d="M1087.51,558.50h10v3.5h-10zM1087.51,553.60h10v3.5h-10zM1087.51,548.70h10v3.5h-10zM1087.51,543.80h10v3.5h-10zM1087.51,538.90h10v3.5h-10zM1087.51,534.00h10v3.5h-10zM1087.51,529.10h10v3.5h-10zM1087.51,524.20h10v3.5h-10zM1087.51,519.30h10v3.5h-10zM1087.51,514.40h10v3.5h-10zM1087.51,509.50h10v3.5h-10zM1087.51,504.60h10v3.5h-10zM1087.51,499.70h10v3.5h-10zM1087.51,494.80h10v3.5h-10zM1087.51,489.90h10v3.5h-10zM1087.51,485.00h10v3.5h-10zM1087.51,480.10h10v3.5h-10zM1087.51,475.20h10v3.5h-10zM1087.51,470.30h10v3.5h-10zM1087.51,465.40h10v3.5h-10zM1087.51,460.50h10v3.5h-10zM1087.51,455.60h10v3.5h-10zM1087.51,450.70h10v3.5h-10z" fill="#0f375f"/><linearGradient id="gb16" gradientUnits="userSpaceOnUse" x1="0" y1="272.5" x2="0" y2="562.0"><stop offset="0" stop-color="rgb(20,200,212)" stop-opacity="0.5"/><stop offset="0.2" stop-color="rgb(20,200,212)" stop-opacity="0.2"/><stop offset="1" stop-color="rgb(20,200,212)" stop-opacity="0"/></linearGradient><rect x="1142.64" y="272.50" width="10" height="289.50" fill="url(#gb16)"/><path d="M1142.64,558.50h10v3.5h-10zM1142.64,553.60h10v3.5h-10zM1142.64,548.70h10v3.5h-10zM1142.64,543.80h10v3.5h-10zM1142.64,538.90h10v3.5h-10zM1142.64,534.00h10v3.5h-10zM1142.64,529.10h10v3.5h-10zM1142.64,524.20h10v3.5h-10zM1142.64,519.30h10v3.5h-10zM1142.64,514.40h10v3.5h-10zM1142.64,509.50h10v3.5h-10zM1142.64,504.60h10v3.5h-10zM1142.64,499.70h10v3.5h-10zM1142.64,494.80h10v3.5h-10zM1142.64,489.90h10v3.5h-10zM1142.64,485.00h10v3.5h-10zM1142.64,480.10h10v3.5h-10zM1142.64,475.20h10v3.5h-10zM1142.64,470.30h10v3.5h-10zM1142.64,465.40h10v3.5h-10zM1142.64,460.50h10v3.5h-10zM1142.64,455.60h10v3.5h-10zM1142.64,450.70h10v3.5h-10zM1142.64,445.80h10v3.5h-10zM1142.64,440.90h10v3.5h-10zM1142.64,436.00h10v3.5h-10zM1142.64,431.10h10v3.5h-10zM1142.64,426.20h10v3.5h-10zM1142.64,421.30h10v3.5h-10zM1142.64,416.40h10v3.5h-10zM1142.64,411.50h10v3.5h-10zM1142.64,406.60h10v3.5h-10zM1142.64,401.70h10v3.5h-10zM1142.64,396.80h10v3.5h-10zM1142.64,391.90h10v3.5h-10zM1142.64,387.00h10v3.5h-10zM1142.64,382.10h10v3.5h-10zM1142.64,377.20h10v3.5h-10zM1142.64,372.30h10v3.5h-10zM1142.64,367.40h10v3.5h-10zM1142.64,362.50h10v3.5h-10zM1142.64,357.60h10v3.5h-10zM1142.64,352.70h10v3.5h-10zM1142.64,347.80h10v3.5h-10zM1142.64,342.90h10v3.5h-10zM1142.64,338.00h10v3.5h-10zM1142.64,333.10h10v3.5h-10zM1142.64,328.20h10v3.5h-10zM1142.64,323.30h10v3.5h-10zM1142.64,318.40h10v3.5h-10zM1142.64,313.50h10v3.5h-10zM1142.64,308.60h10v3.5h-10zM1142.64,303.70h10v3.5h-10zM1142.64,298.80h10v3.5h-10zM1142.64,293.90h10v3.5h-10zM1142.64,289.00h10v3.5h-10zM1142.64,284.10h10v3.5h-10zM1142.64,279.20h10v3.5h-10zM1142.64,274.30h10v3.5h-10z" fill="#0f375f"/><linearGradient id="gb17" gradientUnits="userSpaceOnUse" x1="0" y1="315.5" x2="0" y2="562.0"><stop offset="0" stop-color="rgb(20,200,212)" stop-opacity="0.5"/><stop offset="0.2" stop-color="rgb(20,200,212)" stop-opacity="0.2"/><stop offset="1" stop-color="rgb(20,200,212)" stop-opacity="0"/></linearGradient><rect x="1197.77" y="315.50" width="10" height="246.50" fill="url(#gb17)"/><path d="M1197.77,558.50h10v3.5h-10zM1197.77,553.60h10v3.5h-10zM1197.77,548.70h10v3.5h-10zM1197.77,543.80h10v3.5h-10zM1197.77,538.90h10v3.5h-10zM1197.77,534.00h10v3.5h-10zM1197.77,529.10h10v3.5h-10zM1197.77,524.20h10v3.5h-10zM1197.77,519.30h10v3.5h-10zM1197.77,514.40h10v3.5h-10zM1197.77,509.50h10v3.5h-10zM1197.77,504.60h10v3.5h-10zM1197.77,499.70h10v3.5h-10zM1197.77,494.80h10v3.5h-10zM1197.77,489.90h10v3.5h-10zM1197.77,485.00h10v3.5h-10zM1197.77,480.10h10v3.5h-10zM1197.77,475.20h10v3.5h-10zM1197.77,470.30h10v3.5h-10zM1197.77,465.40h10v3.5h-10zM1197.77,460.50h10v3.5h-10zM1197.77,455.60h10v3.5h-10zM1197.77,450.70h10v3.5h-10zM1197.77,445.80h10v3.5h-10zM1197.77,440.90h10v3.5h-10zM1197.77,436.00h10v3.5h-10zM1197.77,431.10h10v3.5h-10zM1197.77,426.20h10v3.5h-10zM1197.77,421.30h10v3.5h-10zM1197.77,416.40h10v3.5h-10zM1197.77,411.50h10v3.5h-10zM1197.77,406.60h10v3.5h-10zM1197.77,401.70h10v3.5h-10zM1197.77,396.80h10v3.5h-10zM1197.77,391.90h10v3.5h-10zM1197.77,387.00h10v3.5h-10zM1197.77,382.10h10v3.5h-10zM1197.77,377.20h10v3.5h-10zM1197.77,372.30h10v3.5h-10zM1197.77,367.40h10v3.5h-10zM1197.77,362.50h10v3.5h-10zM1197.77,357.60h10v3.5h-10zM1197.77,352.70h10v3.5h-10zM1197.77,347.80h10v3.5h-10zM1197.77,342.90h10v3.5h-10zM1197.77,338.00h10v3.5h-10zM1197.77,333.10h10v3.5h-10zM1197.77,328.20h10v3.5h-10zM1197.77,323.30h10v3.5h-10zM1197.77,318.40h10v3.5h-10z" fill="#0f375f"/><linearGradient id="gb18" gradientUnits="userSpaceOnUse" x1="0" y1="182.3" x2="0" y2="562.0"><stop offset="0" stop-color="rgb(20,200,212)" stop-opacity="0.5"/><stop offset="0.2" stop-color="rgb(20,200,212)" stop-opacity="0.2"/><stop offset="1" stop-color="rgb(20,200,212)" stop-opacity="0"/></linearGradient><rect x="1252.90" y="182.30" width="10" height="379.70" fill="url(#gb18)"/><path d="M1252.90,558.50h10v3.5h-10zM1252.90,553.60h10v3.5h-10zM1252.90,548.70h10v3.5h-10zM1252.90,543.80h10v3.5h-10zM1252.90,538.90h10v3.5h-10zM1252.90,534.00h10v3.5h-10zM1252.90,529.10h10v3.5h-10zM1252.90,524.20h10v3.5h-10zM1252.90,519.30h10v3.5h-10zM1252.90,514.40h10v3.5h-10zM1252.90,509.50h10v3.5h-10zM1252.90,504.60h10v3.5h-10zM1252.90,499.70h10v3.5h-10zM1252.90,494.80h10v3.5h-10zM1252.90,489.90h10v3.5h-10zM1252.90,485.00h10v3.5h-10zM1252.90,480.10h10v3.5h-10zM1252.90,475.20h10v3.5h-10zM1252.90,470.30h10v3.5h-10zM1252.90,465.40h10v3.5h-10zM1252.90,460.50h10v3.5h-10zM1252.90,455.60h10v3.5h-10zM1252.90,450.70h10v3.5h-10zM1252.90,445.80h10v3.5h-10zM1252.90,440.90h10v3.5h-10zM1252.90,436.00h10v3.5h-10zM1252.90,431.10h10v3.5h-10zM1252.90,426.20h10v3.5h-10zM1252.90,421.30h10v3.5h-10zM1252.90,416.40h10v3.5h-10zM1252.90,411.50h10v3.5h-10zM1252.90,406.60h10v3.5h-10zM1252.90,401.70h10v3.5h-10zM1252.90,396.80h10v3.5h-10zM1252.90,391.90h10v3.5h-10zM1252.90,387.00h10v3.5h-10zM1252.90,382.10h10v3.5h-10zM1252.90,377.20h10v3.5h-10zM1252.90,372.30h10v3.5h-10zM1252.90,367.40h10v3.5h-10zM1252.90,362.50h10v3.5h-10zM1252.90,357.60h10v3.5h-10zM1252.90,352.70h10v3.5h-10zM1252.90,347.80h10v3.5h-10zM1252.90,342.90h10v3.5h-10zM1252.90,338.00h10v3.5h-10zM1252.90,333.10h10v3.5h-10zM1252.90,328.20h10v3.5h-10zM1252.90,323.30h10v3.5h-10zM1252.90,318.40h10v3.5h-10zM1252.90,313.50h10v3.5h-10zM1252.90,308.60h10v3.5h-10zM1252.90,303.70h10v3.5h-10zM1252.90,298.80h10v3.5h-10zM1252.90,293.90h10v3.5h-10zM1252.90,289.00h10v3.5h-10zM1252.90,284.10h10v3.5h-10zM1252.90,279.20h10v3.5h-10zM1252.90,274.30h10v3.5h-10zM1252.90,269.40h10v3.5h-10zM1252.90,264.50h10v3.5h-10zM1252.90,259.60h10v3.5h-10zM1252.90,254.70h10v3.5h-10zM1252.90,249.80h10v3.5h-10zM1252.90,244.90h10v3.5h-10zM1252.90,240.00h10v3.5h-10zM1252.90,235.10h10v3.5h-10zM1252.90,230.20h10v3.5h-10zM1252.90,225.30h10v3.5h-10zM1252.90,220.40h10v3.5h-10zM1252.90,215.50h10v3.5h-10zM1252.90,210.60h10v3.5h-10zM1252.90,205.70h10v3.5h-10zM1252.90,200.80h10v3.5h-10zM1252.90,195.90h10v3.5h-10zM1252.90,191.00h10v3.5h-10zM1252.90,186.10h10v3.5h-10z" fill="#0f375f"/><linearGradient id="gb19" gradientUnits="userSpaceOnUse" x1="0" y1="382.6" x2="0" y2="562.0"><stop offset="0" stop-color="rgb(20,200,212)" stop-opacity="0.5"/><stop offset="0.2" stop-color="rgb(20,200,212)" stop-opacity="0.2"/><stop offset="1" stop-color="rgb(20,200,212)" stop-opacity="0"/></linearGradient><rect x="1308.03" y="382.60" width="10" height="179.40" fill="url(#gb19)"/><path d="M1308.03,558.50h10v3.5h-10zM1308.03,553.60h10v3.5h-10zM1308.03,548.70h10v3.5h-10zM1308.03,543.80h10v3.5h-10zM1308.03,538.90h10v3.5h-10zM1308.03,534.00h10v3.5h-10zM1308.03,529.10h10v3.5h-10zM1308.03,524.20h10v3.5h-10zM1308.03,519.30h10v3.5h-10zM1308.03,514.40h10v3.5h-10zM1308.03,509.50h10v3.5h-10zM1308.03,504.60h10v3.5h-10zM1308.03,499.70h10v3.5h-10zM1308.03,494.80h10v3.5h-10zM1308.03,489.90h10v3.5h-10zM1308.03,485.00h10v3.5h-10zM1308.03,480.10h10v3.5h-10zM1308.03,475.20h10v3.5h-10zM1308.03,470.30h10v3.5h-10zM1308.03,465.40h10v3.5h-10zM1308.03,460.50h10v3.5h-10zM1308.03,455.60h10v3.5h-10zM1308.03,450.70h10v3.5h-10zM1308.03,445.80h10v3.5h-10zM1308.03,440.90h10v3.5h-10zM1308.03,436.00h10v3.5h-10zM1308.03,431.10h10v3.5h-10zM1308.03,426.20h10v3.5h-10zM1308.03,421.30h10v3.5h-10zM1308.03,416.40h10v3.5h-10zM1308.03,411.50h10v3.5h-10zM1308.03,406.60h10v3.5h-10zM1308.03,401.70h10v3.5h-10zM1308.03,396.80h10v3.5h-10zM1308.03,391.90h10v3.5h-10zM1308.03,387.00h10v3.5h-10zM1308.03,382.10h10v3.5h-10z" fill="#0f375f"/></g>
<rect x="261.06" y="396.30" width="9" height="165.70" rx="4.5" fill="url(#bg1)"/>
<rect x="316.19" y="344.30" width="9" height="217.70" rx="4.5" fill="url(#bg1)"/>
<rect x="371.32" y="437.60" width="9" height="124.40" rx="4.5" fill="url(#bg1)"/>
<rect x="426.45" y="503.50" width="9" height="58.50" rx="4.5" fill="url(#bg1)"/>
<rect x="481.58" y="548.50" width="9" height="13.50" rx="4.5" fill="url(#bg1)"/>
<rect x="536.71" y="364.10" width="9" height="197.90" rx="4.5" fill="url(#bg1)"/>
<rect x="591.85" y="512.80" width="9" height="49.20" rx="4.5" fill="url(#bg1)"/>
<rect x="646.97" y="381.00" width="9" height="181.00" rx="4.5" fill="url(#bg1)"/>
<rect x="702.11" y="379.80" width="9" height="182.20" rx="4.5" fill="url(#bg1)"/>
<rect x="757.23" y="410.30" width="9" height="151.70" rx="4.5" fill="url(#bg1)"/>
<rect x="812.37" y="428.00" width="9" height="134.00" rx="4.5" fill="url(#bg1)"/>
<rect x="867.49" y="449.30" width="9" height="112.70" rx="4.5" fill="url(#bg1)"/>
<rect x="922.62" y="314.70" width="9" height="247.30" rx="4.5" fill="url(#bg1)"/>
<rect x="977.75" y="307.50" width="9" height="254.50" rx="4.5" fill="url(#bg1)"/>
<rect x="1032.88" y="444.50" width="9" height="117.50" rx="4.5" fill="url(#bg1)"/>
<rect x="1088.01" y="482.70" width="9" height="79.30" rx="4.5" fill="url(#bg1)"/>
<rect x="1143.14" y="427.20" width="9" height="134.80" rx="4.5" fill="url(#bg1)"/>
<rect x="1198.27" y="553.00" width="9" height="9.00" rx="4.5" fill="url(#bg1)"/>
<rect x="1253.40" y="373.00" width="9" height="189.00" rx="4.5" fill="url(#bg1)"/>
<rect x="1308.53" y="493.70" width="9" height="68.30" rx="4.5" fill="url(#bg1)"/>
<path d="M238.0,562.5 H1340.6" stroke="#cfcfd2" stroke-width="1"/>
<path d="M238.00,562.0 v4.5 M348.26,562.0 v4.5 M458.52,562.0 v4.5 M568.78,562.0 v4.5 M679.04,562.0 v4.5 M789.30,562.0 v4.5 M899.56,562.0 v4.5 M1009.82,562.0 v4.5 M1120.08,562.0 v4.5 M1230.34,562.0 v4.5 M1340.60,562.0 v4.5 " stroke="#cfcfd2" stroke-width="1"/>
<text x="265.6" y="577.8" font-size="10.9" fill="#cfcfd2" text-anchor="middle">2022&#8211;6&#8211;8</text>
<text x="375.8" y="577.8" font-size="10.9" fill="#cfcfd2" text-anchor="middle">2022&#8211;6&#8211;10</text>
<text x="486.1" y="577.8" font-size="10.9" fill="#cfcfd2" text-anchor="middle">2022&#8211;6&#8211;12</text>
<text x="596.3" y="577.8" font-size="10.9" fill="#cfcfd2" text-anchor="middle">2022&#8211;6&#8211;14</text>
<text x="706.6" y="577.8" font-size="10.9" fill="#cfcfd2" text-anchor="middle">2022&#8211;6&#8211;16</text>
<text x="816.9" y="577.8" font-size="10.9" fill="#cfcfd2" text-anchor="middle">2022&#8211;6&#8211;18</text>
<text x="927.1" y="577.8" font-size="10.9" fill="#cfcfd2" text-anchor="middle">2022&#8211;6&#8211;20</text>
<text x="1037.4" y="577.8" font-size="10.9" fill="#cfcfd2" text-anchor="middle">2022&#8211;6&#8211;22</text>
<text x="1147.6" y="577.8" font-size="10.9" fill="#cfcfd2" text-anchor="middle">2022&#8211;6&#8211;24</text>
<text x="1257.9" y="577.8" font-size="10.9" fill="#cfcfd2" text-anchor="middle">2022&#8211;6&#8211;26</text>
<path d="M265.56,339.70 C265.56,339.70 282.71,225.00 320.69,225.00 C337.84,225.00 360.93,225.00 375.82,241.20 C416.06,284.96 396.03,317.89 430.95,386.30 C451.16,425.89 473.16,457.20 486.08,457.20 C528.29,457.20 504.21,169.30 541.21,169.30 C559.34,169.30 564.88,301.90 596.35,301.90 C620.01,301.90 617.29,209.00 651.47,209.00 C672.42,209.00 687.62,219.79 706.61,245.60 C742.75,294.74 730.41,358.90 761.73,358.90 C785.54,358.90 794.10,280.60 816.87,280.60 C849.23,280.60 851.21,405.10 871.99,405.10 C906.34,405.10 888.30,187.00 927.12,187.00 C943.43,187.00 950.48,229.44 982.25,263.70 C1005.61,288.89 1020.31,276.97 1037.38,305.90 C1075.44,370.37 1067.50,450.50 1092.51,450.50 C1122.63,450.50 1107.56,272.50 1147.64,272.50 C1162.69,272.50 1184.77,315.50 1202.77,315.50 C1239.90,315.50 1235.32,182.30 1257.90,182.30 C1290.45,182.30 1313.03,382.60 1313.03,382.60" fill="none" stroke="#4d8ff5" stroke-width="1.7"/>
<circle cx="265.56" cy="339.70" r="5.5" fill="#fff" stroke="#4d8ff5" stroke-width="2"/>
<circle cx="320.69" cy="225.00" r="5.5" fill="#fff" stroke="#4d8ff5" stroke-width="2"/>
<circle cx="375.82" cy="241.20" r="5.5" fill="#fff" stroke="#4d8ff5" stroke-width="2"/>
<circle cx="430.95" cy="386.30" r="5.5" fill="#fff" stroke="#4d8ff5" stroke-width="2"/>
<circle cx="486.08" cy="457.20" r="5.5" fill="#fff" stroke="#4d8ff5" stroke-width="2"/>
<circle cx="541.21" cy="169.30" r="5.5" fill="#fff" stroke="#4d8ff5" stroke-width="2"/>
<circle cx="596.35" cy="301.90" r="5.5" fill="#fff" stroke="#4d8ff5" stroke-width="2"/>
<circle cx="651.47" cy="209.00" r="5.5" fill="#fff" stroke="#4d8ff5" stroke-width="2"/>
<circle cx="706.61" cy="245.60" r="5.5" fill="#fff" stroke="#4d8ff5" stroke-width="2"/>
<circle cx="761.73" cy="358.90" r="5.5" fill="#fff" stroke="#4d8ff5" stroke-width="2"/>
<circle cx="816.87" cy="280.60" r="5.5" fill="#fff" stroke="#4d8ff5" stroke-width="2"/>
<circle cx="871.99" cy="405.10" r="5.5" fill="#fff" stroke="#4d8ff5" stroke-width="2"/>
<circle cx="927.12" cy="187.00" r="5.5" fill="#fff" stroke="#4d8ff5" stroke-width="2"/>
<circle cx="982.25" cy="263.70" r="5.5" fill="#fff" stroke="#4d8ff5" stroke-width="2"/>
<circle cx="1037.38" cy="305.90" r="5.5" fill="#fff" stroke="#4d8ff5" stroke-width="2"/>
<circle cx="1092.51" cy="450.50" r="5.5" fill="#fff" stroke="#4d8ff5" stroke-width="2"/>
<circle cx="1147.64" cy="272.50" r="5.5" fill="#fff" stroke="#4d8ff5" stroke-width="2"/>
<circle cx="1202.77" cy="315.50" r="5.5" fill="#fff" stroke="#4d8ff5" stroke-width="2"/>
<circle cx="1257.90" cy="182.30" r="5.5" fill="#fff" stroke="#4d8ff5" stroke-width="2"/>
<circle cx="1313.03" cy="382.60" r="5.5" fill="#fff" stroke="#4d8ff5" stroke-width="2"/>
<text x="104.8" y="714.0" font-size="15.1" font-weight="bold" fill="#eef1fa">Saturday</text>
<path d="M227.3,714.5 H1409.3" stroke="#d0d0d4" stroke-width="1"/>
<path d="M227.30,714.5 v5 M381.47,714.5 v5 M535.64,714.5 v5 M689.81,714.5 v5 M843.98,714.5 v5 M998.15,714.5 v5 M1152.32,714.5 v5 M1306.49,714.5 v5 " stroke="#d0d0d4" stroke-width="1"/>
<text x="227.3" y="729.8" font-size="10.1" fill="#d0d0d4" text-anchor="middle">12a</text>
<text x="381.5" y="729.8" font-size="10.1" fill="#d0d0d4" text-anchor="middle">3a</text>
<text x="535.6" y="729.8" font-size="10.1" fill="#d0d0d4" text-anchor="middle">6a</text>
<text x="689.8" y="729.8" font-size="10.1" fill="#d0d0d4" text-anchor="middle">9a</text>
<text x="844.0" y="729.8" font-size="10.1" fill="#d0d0d4" text-anchor="middle">12p</text>
<text x="998.2" y="729.8" font-size="10.1" fill="#d0d0d4" text-anchor="middle">3p</text>
<text x="1152.3" y="729.8" font-size="10.1" fill="#d0d0d4" text-anchor="middle">6p</text>
<text x="1306.5" y="729.8" font-size="10.1" fill="#d0d0d4" text-anchor="middle">9p</text>
<text x="104.8" y="786.0" font-size="15.1" font-weight="bold" fill="#eef1fa">Friday</text>
<path d="M227.3,786.5 H1409.3" stroke="#d0d0d4" stroke-width="1"/>
<path d="M227.30,786.5 v5 M381.47,786.5 v5 M535.64,786.5 v5 M689.81,786.5 v5 M843.98,786.5 v5 M998.15,786.5 v5 M1152.32,786.5 v5 M1306.49,786.5 v5 " stroke="#d0d0d4" stroke-width="1"/>
<text x="227.3" y="801.8" font-size="10.1" fill="#d0d0d4" text-anchor="middle">12a</text>
<text x="381.5" y="801.8" font-size="10.1" fill="#d0d0d4" text-anchor="middle">3a</text>
<text x="535.6" y="801.8" font-size="10.1" fill="#d0d0d4" text-anchor="middle">6a</text>
<text x="689.8" y="801.8" font-size="10.1" fill="#d0d0d4" text-anchor="middle">9a</text>
<text x="844.0" y="801.8" font-size="10.1" fill="#d0d0d4" text-anchor="middle">12p</text>
<text x="998.2" y="801.8" font-size="10.1" fill="#d0d0d4" text-anchor="middle">3p</text>
<text x="1152.3" y="801.8" font-size="10.1" fill="#d0d0d4" text-anchor="middle">6p</text>
<text x="1306.5" y="801.8" font-size="10.1" fill="#d0d0d4" text-anchor="middle">9p</text>
<text x="104.8" y="858.0" font-size="15.1" font-weight="bold" fill="#eef1fa">Thursday</text>
<path d="M227.3,858.5 H1409.3" stroke="#d0d0d4" stroke-width="1"/>
<path d="M227.30,858.5 v5 M381.47,858.5 v5 M535.64,858.5 v5 M689.81,858.5 v5 M843.98,858.5 v5 M998.15,858.5 v5 M1152.32,858.5 v5 M1306.49,858.5 v5 " stroke="#d0d0d4" stroke-width="1"/>
<text x="227.3" y="873.8" font-size="10.1" fill="#d0d0d4" text-anchor="middle">12a</text>
<text x="381.5" y="873.8" font-size="10.1" fill="#d0d0d4" text-anchor="middle">3a</text>
<text x="535.6" y="873.8" font-size="10.1" fill="#d0d0d4" text-anchor="middle">6a</text>
<text x="689.8" y="873.8" font-size="10.1" fill="#d0d0d4" text-anchor="middle">9a</text>
<text x="844.0" y="873.8" font-size="10.1" fill="#d0d0d4" text-anchor="middle">12p</text>
<text x="998.2" y="873.8" font-size="10.1" fill="#d0d0d4" text-anchor="middle">3p</text>
<text x="1152.3" y="873.8" font-size="10.1" fill="#d0d0d4" text-anchor="middle">6p</text>
<text x="1306.5" y="873.8" font-size="10.1" fill="#d0d0d4" text-anchor="middle">9p</text>
<text x="104.8" y="930.0" font-size="15.1" font-weight="bold" fill="#eef1fa">Wednesday</text>
<path d="M227.3,930.5 H1409.3" stroke="#d0d0d4" stroke-width="1"/>
<path d="M227.30,930.5 v5 M381.47,930.5 v5 M535.64,930.5 v5 M689.81,930.5 v5 M843.98,930.5 v5 M998.15,930.5 v5 M1152.32,930.5 v5 M1306.49,930.5 v5 " stroke="#d0d0d4" stroke-width="1"/>
<text x="227.3" y="945.8" font-size="10.1" fill="#d0d0d4" text-anchor="middle">12a</text>
<text x="381.5" y="945.8" font-size="10.1" fill="#d0d0d4" text-anchor="middle">3a</text>
<text x="535.6" y="945.8" font-size="10.1" fill="#d0d0d4" text-anchor="middle">6a</text>
<text x="689.8" y="945.8" font-size="10.1" fill="#d0d0d4" text-anchor="middle">9a</text>
<text x="844.0" y="945.8" font-size="10.1" fill="#d0d0d4" text-anchor="middle">12p</text>
<text x="998.2" y="945.8" font-size="10.1" fill="#d0d0d4" text-anchor="middle">3p</text>
<text x="1152.3" y="945.8" font-size="10.1" fill="#d0d0d4" text-anchor="middle">6p</text>
<text x="1306.5" y="945.8" font-size="10.1" fill="#d0d0d4" text-anchor="middle">9p</text>
<text x="104.8" y="1002.0" font-size="15.1" font-weight="bold" fill="#eef1fa">Tuesday</text>
<path d="M227.3,1002.5 H1409.3" stroke="#d0d0d4" stroke-width="1"/>
<path d="M227.30,1002.5 v5 M381.47,1002.5 v5 M535.64,1002.5 v5 M689.81,1002.5 v5 M843.98,1002.5 v5 M998.15,1002.5 v5 M1152.32,1002.5 v5 M1306.49,1002.5 v5 " stroke="#d0d0d4" stroke-width="1"/>
<text x="227.3" y="1017.8" font-size="10.1" fill="#d0d0d4" text-anchor="middle">12a</text>
<text x="381.5" y="1017.8" font-size="10.1" fill="#d0d0d4" text-anchor="middle">3a</text>
<text x="535.6" y="1017.8" font-size="10.1" fill="#d0d0d4" text-anchor="middle">6a</text>
<text x="689.8" y="1017.8" font-size="10.1" fill="#d0d0d4" text-anchor="middle">9a</text>
<text x="844.0" y="1017.8" font-size="10.1" fill="#d0d0d4" text-anchor="middle">12p</text>
<text x="998.2" y="1017.8" font-size="10.1" fill="#d0d0d4" text-anchor="middle">3p</text>
<text x="1152.3" y="1017.8" font-size="10.1" fill="#d0d0d4" text-anchor="middle">6p</text>
<text x="1306.5" y="1017.8" font-size="10.1" fill="#d0d0d4" text-anchor="middle">9p</text>
<circle cx="227.30" cy="703.8" r="8.43" fill="#4992ff" fill-opacity="0.8"/>
<circle cx="278.69" cy="703.8" r="1.69" fill="#4992ff" fill-opacity="0.8"/>
<circle cx="792.59" cy="703.8" r="3.37" fill="#4992ff" fill-opacity="0.8"/>
<circle cx="843.98" cy="703.8" r="6.74" fill="#4992ff" fill-opacity="0.8"/>
<circle cx="895.37" cy="703.8" r="1.69" fill="#4992ff" fill-opacity="0.8"/>
<circle cx="946.76" cy="703.8" r="1.69" fill="#4992ff" fill-opacity="0.8"/>
<circle cx="998.15" cy="703.8" r="5.05" fill="#4992ff" fill-opacity="0.8"/>
<circle cx="1049.54" cy="703.8" r="6.74" fill="#4992ff" fill-opacity="0.8"/>
<circle cx="1100.93" cy="703.8" r="10.11" fill="#4992ff" fill-opacity="0.8"/>
<circle cx="1152.32" cy="703.8" r="6.74" fill="#4992ff" fill-opacity="0.8"/>
<circle cx="1203.71" cy="703.8" r="6.74" fill="#4992ff" fill-opacity="0.8"/>
<circle cx="1255.10" cy="703.8" r="5.05" fill="#4992ff" fill-opacity="0.8"/>
<circle cx="1306.49" cy="703.8" r="5.05" fill="#4992ff" fill-opacity="0.8"/>
<circle cx="1357.88" cy="703.8" r="3.37" fill="#4992ff" fill-opacity="0.8"/>
<circle cx="1409.27" cy="703.8" r="8.43" fill="#4992ff" fill-opacity="0.8"/>
<circle cx="227.30" cy="775.8" r="11.79" fill="#7cffb2" fill-opacity="0.8"/>
<circle cx="741.20" cy="775.8" r="8.43" fill="#7cffb2" fill-opacity="0.8"/>
<circle cx="792.59" cy="775.8" r="3.37" fill="#7cffb2" fill-opacity="0.8"/>
<circle cx="843.98" cy="775.8" r="3.37" fill="#7cffb2" fill-opacity="0.8"/>
<circle cx="895.37" cy="775.8" r="10.11" fill="#7cffb2" fill-opacity="0.8"/>
<circle cx="946.76" cy="775.8" r="15.17" fill="#7cffb2" fill-opacity="0.8"/>
<circle cx="998.15" cy="775.8" r="18.54" fill="#7cffb2" fill-opacity="0.8"/>
<circle cx="1049.54" cy="775.8" r="10.11" fill="#7cffb2" fill-opacity="0.8"/>
<circle cx="1100.93" cy="775.8" r="11.79" fill="#7cffb2" fill-opacity="0.8"/>
<circle cx="1152.32" cy="775.8" r="13.48" fill="#7cffb2" fill-opacity="0.8"/>
<circle cx="1203.71" cy="775.8" r="20.22" fill="#7cffb2" fill-opacity="0.8"/>
<circle cx="1255.10" cy="775.8" r="8.43" fill="#7cffb2" fill-opacity="0.8"/>
<circle cx="1306.49" cy="775.8" r="8.43" fill="#7cffb2" fill-opacity="0.8"/>
<circle cx="1357.88" cy="775.8" r="11.79" fill="#7cffb2" fill-opacity="0.8"/>
<circle cx="1409.27" cy="775.8" r="3.37" fill="#7cffb2" fill-opacity="0.8"/>
<circle cx="227.30" cy="847.8" r="1.69" fill="#fddd60" fill-opacity="0.8"/>
<circle cx="278.69" cy="847.8" r="1.69" fill="#fddd60" fill-opacity="0.8"/>
<circle cx="741.20" cy="847.8" r="5.05" fill="#fddd60" fill-opacity="0.8"/>
<circle cx="792.59" cy="847.8" r="3.37" fill="#fddd60" fill-opacity="0.8"/>
<circle cx="843.98" cy="847.8" r="1.69" fill="#fddd60" fill-opacity="0.8"/>
<circle cx="895.37" cy="847.8" r="15.17" fill="#fddd60" fill-opacity="0.8"/>
<circle cx="946.76" cy="847.8" r="13.48" fill="#fddd60" fill-opacity="0.8"/>
<circle cx="998.15" cy="847.8" r="16.85" fill="#fddd60" fill-opacity="0.8"/>
<circle cx="1049.54" cy="847.8" r="10.11" fill="#fddd60" fill-opacity="0.8"/>
<circle cx="1100.93" cy="847.8" r="8.43" fill="#fddd60" fill-opacity="0.8"/>
<circle cx="1152.32" cy="847.8" r="8.43" fill="#fddd60" fill-opacity="0.8"/>
<circle cx="1203.71" cy="847.8" r="8.43" fill="#fddd60" fill-opacity="0.8"/>
<circle cx="1255.10" cy="847.8" r="11.79" fill="#fddd60" fill-opacity="0.8"/>
<circle cx="1306.49" cy="847.8" r="6.74" fill="#fddd60" fill-opacity="0.8"/>
<circle cx="1357.88" cy="847.8" r="3.37" fill="#fddd60" fill-opacity="0.8"/>
<circle cx="1409.27" cy="847.8" r="6.74" fill="#fddd60" fill-opacity="0.8"/>
<circle cx="227.30" cy="919.8" r="11.79" fill="#ff6e76" fill-opacity="0.8"/>
<circle cx="278.69" cy="919.8" r="5.05" fill="#ff6e76" fill-opacity="0.8"/>
<circle cx="638.42" cy="919.8" r="1.69" fill="#ff6e76" fill-opacity="0.8"/>
<circle cx="741.20" cy="919.8" r="8.43" fill="#ff6e76" fill-opacity="0.8"/>
<circle cx="792.59" cy="919.8" r="6.74" fill="#ff6e76" fill-opacity="0.8"/>
<circle cx="843.98" cy="919.8" r="11.79" fill="#ff6e76" fill-opacity="0.8"/>
<circle cx="895.37" cy="919.8" r="23.59" fill="#ff6e76" fill-opacity="0.8"/>
<circle cx="946.76" cy="919.8" r="21.91" fill="#ff6e76" fill-opacity="0.8"/>
<circle cx="998.15" cy="919.8" r="20.22" fill="#ff6e76" fill-opacity="0.8"/>
<circle cx="1049.54" cy="919.8" r="15.17" fill="#ff6e76" fill-opacity="0.8"/>
<circle cx="1100.93" cy="919.8" r="8.43" fill="#ff6e76" fill-opacity="0.8"/>
<circle cx="1152.32" cy="919.8" r="8.43" fill="#ff6e76" fill-opacity="0.8"/>
<circle cx="1203.71" cy="919.8" r="16.85" fill="#ff6e76" fill-opacity="0.8"/>
<circle cx="1255.10" cy="919.8" r="10.11" fill="#ff6e76" fill-opacity="0.8"/>
<circle cx="1306.49" cy="919.8" r="6.74" fill="#ff6e76" fill-opacity="0.8"/>
<circle cx="1357.88" cy="919.8" r="6.74" fill="#ff6e76" fill-opacity="0.8"/>
<circle cx="1409.27" cy="919.8" r="1.69" fill="#ff6e76" fill-opacity="0.8"/>
<circle cx="227.30" cy="991.8" r="1.69" fill="#58d9f9" fill-opacity="0.8"/>
<circle cx="278.69" cy="991.8" r="5.05" fill="#58d9f9" fill-opacity="0.8"/>
<circle cx="484.25" cy="991.8" r="1.69" fill="#58d9f9" fill-opacity="0.8"/>
<circle cx="689.81" cy="991.8" r="3.37" fill="#58d9f9" fill-opacity="0.8"/>
<circle cx="741.20" cy="991.8" r="6.74" fill="#58d9f9" fill-opacity="0.8"/>
<circle cx="792.59" cy="991.8" r="6.74" fill="#58d9f9" fill-opacity="0.8"/>
<circle cx="843.98" cy="991.8" r="3.37" fill="#58d9f9" fill-opacity="0.8"/>
<circle cx="895.37" cy="991.8" r="6.74" fill="#58d9f9" fill-opacity="0.8"/>
<circle cx="946.76" cy="991.8" r="6.74" fill="#58d9f9" fill-opacity="0.8"/>
<circle cx="998.15" cy="991.8" r="23.59" fill="#58d9f9" fill-opacity="0.8"/>
<circle cx="1049.54" cy="991.8" r="20.22" fill="#58d9f9" fill-opacity="0.8"/>
<circle cx="1100.93" cy="991.8" r="1.69" fill="#58d9f9" fill-opacity="0.8"/>
<circle cx="1152.32" cy="991.8" r="13.48" fill="#58d9f9" fill-opacity="0.8"/>
<circle cx="1203.71" cy="991.8" r="8.43" fill="#58d9f9" fill-opacity="0.8"/>
<circle cx="1255.10" cy="991.8" r="5.05" fill="#58d9f9" fill-opacity="0.8"/>
<circle cx="1306.49" cy="991.8" r="11.79" fill="#58d9f9" fill-opacity="0.8"/>
<circle cx="1357.88" cy="991.8" r="5.05" fill="#58d9f9" fill-opacity="0.8"/>
<circle cx="227.30" cy="1063.8" r="3.37" fill="#05c091" fill-opacity="0.8"/>
<circle cx="278.69" cy="1063.8" r="1.69" fill="#05c091" fill-opacity="0.8"/>
<circle cx="381.47" cy="1063.8" r="5.05" fill="#05c091" fill-opacity="0.8"/>
<circle cx="638.42" cy="1063.8" r="3.37" fill="#05c091" fill-opacity="0.8"/>
<circle cx="741.20" cy="1063.8" r="6.74" fill="#05c091" fill-opacity="0.8"/>
<circle cx="792.59" cy="1063.8" r="1.69" fill="#05c091" fill-opacity="0.8"/>
<circle cx="843.98" cy="1063.8" r="8.43" fill="#05c091" fill-opacity="0.8"/>
<circle cx="895.37" cy="1063.8" r="16.85" fill="#05c091" fill-opacity="0.8"/>
<circle cx="946.76" cy="1063.8" r="8.43" fill="#05c091" fill-opacity="0.8"/>
<circle cx="998.15" cy="1063.8" r="11.79" fill="#05c091" fill-opacity="0.8"/>
<circle cx="1049.54" cy="1063.8" r="18.54" fill="#05c091" fill-opacity="0.8"/>
<circle cx="1100.93" cy="1063.8" r="10.11" fill="#05c091" fill-opacity="0.8"/>
<circle cx="1203.71" cy="1063.8" r="8.43" fill="#05c091" fill-opacity="0.8"/>
<circle cx="1255.10" cy="1063.8" r="5.05" fill="#05c091" fill-opacity="0.8"/>
<circle cx="1306.49" cy="1063.8" r="6.74" fill="#05c091" fill-opacity="0.8"/>
<circle cx="1357.88" cy="1063.8" r="3.37" fill="#05c091" fill-opacity="0.8"/>
<rect x="1465" y="201.5" width="35" height="35.5" rx="3" fill="#6a5fe0"/>
<path d="M1480.73,213.47 L1481.15,211.32 A8.00,8.00 0 0 1 1483.85,211.32 L1484.27,213.47 A6.00,6.00 0 0 1 1486.58,214.80 L1488.65,214.09 A8.00,8.00 0 0 1 1490.01,216.43 L1488.35,217.87 A6.00,6.00 0 0 1 1488.35,220.53 L1490.01,221.97 A8.00,8.00 0 0 1 1488.65,224.31 L1486.58,223.60 A6.00,6.00 0 0 1 1484.27,224.93 L1483.85,227.08 A8.00,8.00 0 0 1 1481.15,227.08 L1480.73,224.93 A6.00,6.00 0 0 1 1478.42,223.60 L1476.35,224.31 A8.00,8.00 0 0 1 1474.99,221.97 L1476.65,220.53 A6.00,6.00 0 0 1 1476.65,217.87 L1474.99,216.43 A8.00,8.00 0 0 1 1476.35,214.09 L1478.42,214.80 A6.00,6.00 0 0 1 1480.73,213.47 Z" fill="none" stroke="#17162a" stroke-width="1.55" stroke-linejoin="round"/><circle cx="1482.5" cy="219.2" r="2.5" fill="none" stroke="#17162a" stroke-width="1.55"/>
<text x="1322.3" y="1012.3" font-size="17.6" fill="#c4c4c8" fill-opacity="0.58">@稀土掘金技术社区</text></svg>
</body></html>
